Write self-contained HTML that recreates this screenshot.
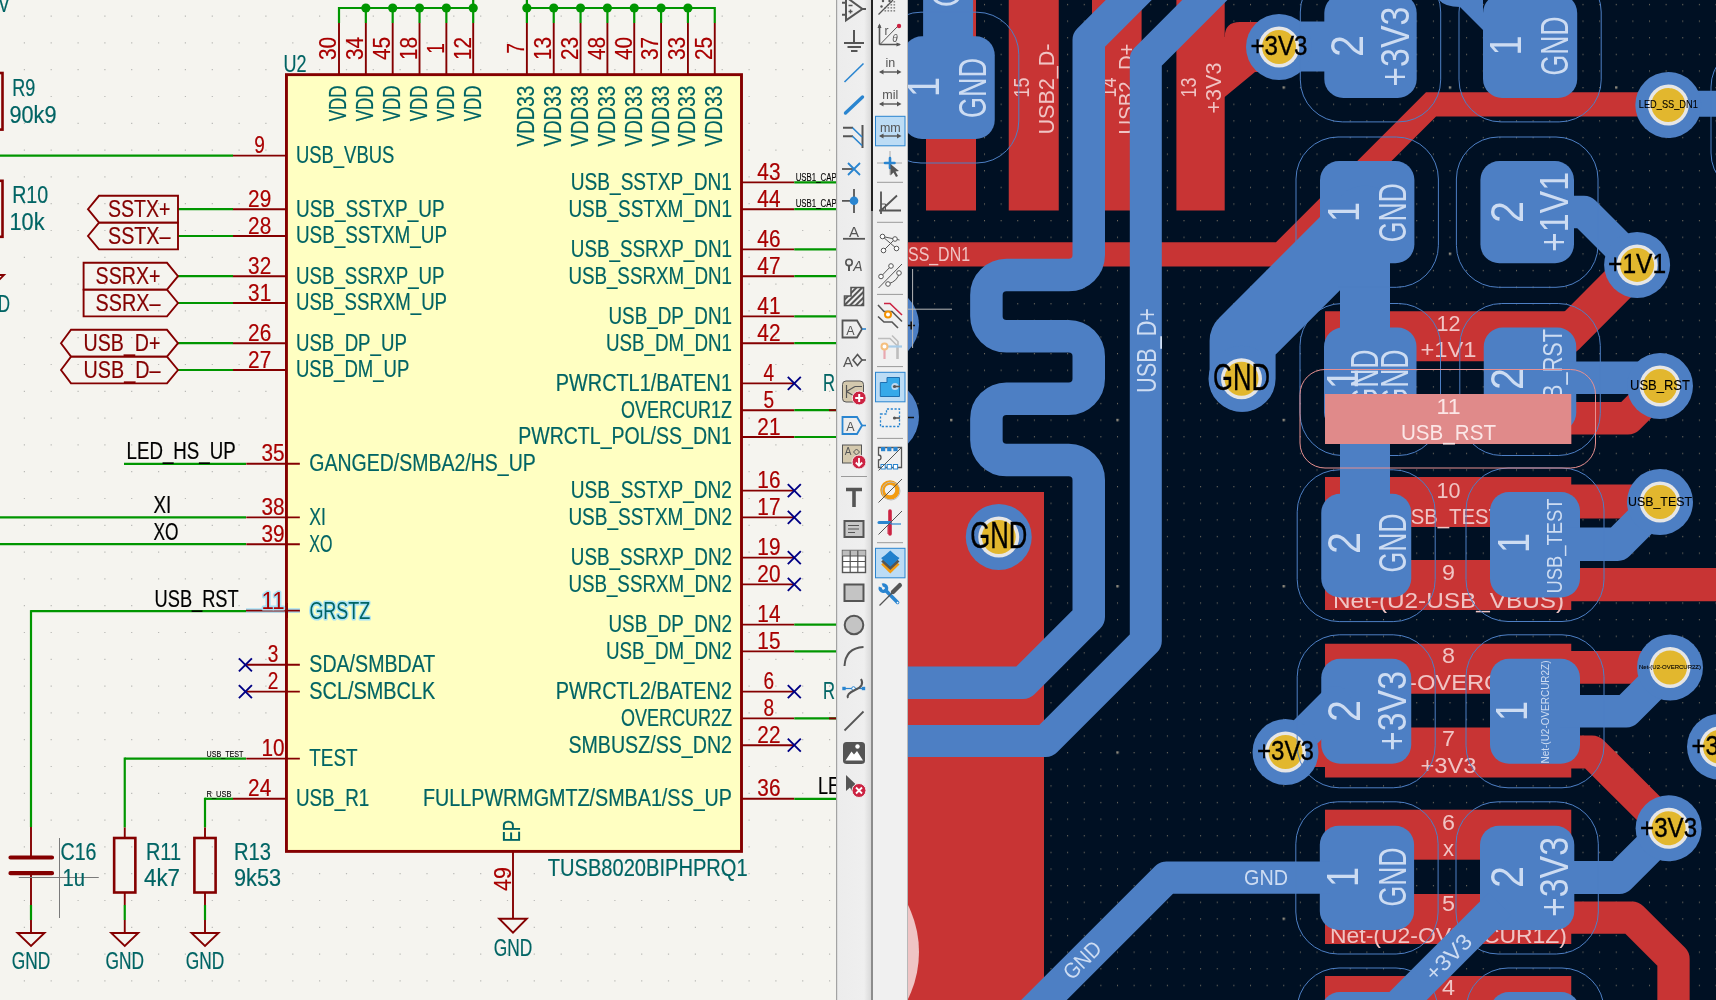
<!DOCTYPE html><html><head><meta charset="utf-8"><style>html,body{margin:0;padding:0;overflow:hidden;background:#f5f4ef}svg{display:block;will-change:transform}</style></head><body><svg width="1716" height="1000" viewBox="0 0 1716 1000"><rect x="0" y="0" width="836" height="1000" fill="#f5f4ef"/><path d="M23.8 15.5h1.2v1.2h-1.2zM23.8 42.3h1.2v1.2h-1.2zM23.8 69.1h1.2v1.2h-1.2zM23.8 95.9h1.2v1.2h-1.2zM23.8 122.7h1.2v1.2h-1.2zM23.8 149.5h1.2v1.2h-1.2zM23.8 176.3h1.2v1.2h-1.2zM23.8 203.1h1.2v1.2h-1.2zM23.8 229.9h1.2v1.2h-1.2zM23.8 256.7h1.2v1.2h-1.2zM23.8 283.5h1.2v1.2h-1.2zM23.8 310.3h1.2v1.2h-1.2zM23.8 337.1h1.2v1.2h-1.2zM23.8 363.9h1.2v1.2h-1.2zM23.8 390.7h1.2v1.2h-1.2zM23.8 417.5h1.2v1.2h-1.2zM23.8 444.3h1.2v1.2h-1.2zM23.8 471.1h1.2v1.2h-1.2zM23.8 497.9h1.2v1.2h-1.2zM23.8 524.7h1.2v1.2h-1.2zM23.8 551.5h1.2v1.2h-1.2zM23.8 578.3h1.2v1.2h-1.2zM23.8 605.1h1.2v1.2h-1.2zM23.8 631.9h1.2v1.2h-1.2zM23.8 658.7h1.2v1.2h-1.2zM23.8 685.5h1.2v1.2h-1.2zM23.8 712.3h1.2v1.2h-1.2zM23.8 739.1h1.2v1.2h-1.2zM23.8 765.9h1.2v1.2h-1.2zM23.8 792.7h1.2v1.2h-1.2zM23.8 819.5h1.2v1.2h-1.2zM23.8 846.3h1.2v1.2h-1.2zM23.8 873.1h1.2v1.2h-1.2zM23.8 899.9h1.2v1.2h-1.2zM23.8 926.7h1.2v1.2h-1.2zM23.8 953.5h1.2v1.2h-1.2zM23.8 980.3h1.2v1.2h-1.2zM50.6 15.5h1.2v1.2h-1.2zM50.6 42.3h1.2v1.2h-1.2zM50.6 69.1h1.2v1.2h-1.2zM50.6 95.9h1.2v1.2h-1.2zM50.6 122.7h1.2v1.2h-1.2zM50.6 149.5h1.2v1.2h-1.2zM50.6 176.3h1.2v1.2h-1.2zM50.6 203.1h1.2v1.2h-1.2zM50.6 229.9h1.2v1.2h-1.2zM50.6 256.7h1.2v1.2h-1.2zM50.6 283.5h1.2v1.2h-1.2zM50.6 310.3h1.2v1.2h-1.2zM50.6 337.1h1.2v1.2h-1.2zM50.6 363.9h1.2v1.2h-1.2zM50.6 390.7h1.2v1.2h-1.2zM50.6 417.5h1.2v1.2h-1.2zM50.6 444.3h1.2v1.2h-1.2zM50.6 471.1h1.2v1.2h-1.2zM50.6 497.9h1.2v1.2h-1.2zM50.6 524.7h1.2v1.2h-1.2zM50.6 551.5h1.2v1.2h-1.2zM50.6 578.3h1.2v1.2h-1.2zM50.6 605.1h1.2v1.2h-1.2zM50.6 631.9h1.2v1.2h-1.2zM50.6 658.7h1.2v1.2h-1.2zM50.6 685.5h1.2v1.2h-1.2zM50.6 712.3h1.2v1.2h-1.2zM50.6 739.1h1.2v1.2h-1.2zM50.6 765.9h1.2v1.2h-1.2zM50.6 792.7h1.2v1.2h-1.2zM50.6 819.5h1.2v1.2h-1.2zM50.6 846.3h1.2v1.2h-1.2zM50.6 873.1h1.2v1.2h-1.2zM50.6 899.9h1.2v1.2h-1.2zM50.6 926.7h1.2v1.2h-1.2zM50.6 953.5h1.2v1.2h-1.2zM50.6 980.3h1.2v1.2h-1.2zM77.5 15.5h1.2v1.2h-1.2zM77.5 42.3h1.2v1.2h-1.2zM77.5 69.1h1.2v1.2h-1.2zM77.5 95.9h1.2v1.2h-1.2zM77.5 122.7h1.2v1.2h-1.2zM77.5 149.5h1.2v1.2h-1.2zM77.5 176.3h1.2v1.2h-1.2zM77.5 203.1h1.2v1.2h-1.2zM77.5 229.9h1.2v1.2h-1.2zM77.5 256.7h1.2v1.2h-1.2zM77.5 283.5h1.2v1.2h-1.2zM77.5 310.3h1.2v1.2h-1.2zM77.5 337.1h1.2v1.2h-1.2zM77.5 363.9h1.2v1.2h-1.2zM77.5 390.7h1.2v1.2h-1.2zM77.5 417.5h1.2v1.2h-1.2zM77.5 444.3h1.2v1.2h-1.2zM77.5 471.1h1.2v1.2h-1.2zM77.5 497.9h1.2v1.2h-1.2zM77.5 524.7h1.2v1.2h-1.2zM77.5 551.5h1.2v1.2h-1.2zM77.5 578.3h1.2v1.2h-1.2zM77.5 605.1h1.2v1.2h-1.2zM77.5 631.9h1.2v1.2h-1.2zM77.5 658.7h1.2v1.2h-1.2zM77.5 685.5h1.2v1.2h-1.2zM77.5 712.3h1.2v1.2h-1.2zM77.5 739.1h1.2v1.2h-1.2zM77.5 765.9h1.2v1.2h-1.2zM77.5 792.7h1.2v1.2h-1.2zM77.5 819.5h1.2v1.2h-1.2zM77.5 846.3h1.2v1.2h-1.2zM77.5 873.1h1.2v1.2h-1.2zM77.5 899.9h1.2v1.2h-1.2zM77.5 926.7h1.2v1.2h-1.2zM77.5 953.5h1.2v1.2h-1.2zM77.5 980.3h1.2v1.2h-1.2zM104.3 15.5h1.2v1.2h-1.2zM104.3 42.3h1.2v1.2h-1.2zM104.3 69.1h1.2v1.2h-1.2zM104.3 95.9h1.2v1.2h-1.2zM104.3 122.7h1.2v1.2h-1.2zM104.3 149.5h1.2v1.2h-1.2zM104.3 176.3h1.2v1.2h-1.2zM104.3 203.1h1.2v1.2h-1.2zM104.3 229.9h1.2v1.2h-1.2zM104.3 256.7h1.2v1.2h-1.2zM104.3 283.5h1.2v1.2h-1.2zM104.3 310.3h1.2v1.2h-1.2zM104.3 337.1h1.2v1.2h-1.2zM104.3 363.9h1.2v1.2h-1.2zM104.3 390.7h1.2v1.2h-1.2zM104.3 417.5h1.2v1.2h-1.2zM104.3 444.3h1.2v1.2h-1.2zM104.3 471.1h1.2v1.2h-1.2zM104.3 497.9h1.2v1.2h-1.2zM104.3 524.7h1.2v1.2h-1.2zM104.3 551.5h1.2v1.2h-1.2zM104.3 578.3h1.2v1.2h-1.2zM104.3 605.1h1.2v1.2h-1.2zM104.3 631.9h1.2v1.2h-1.2zM104.3 658.7h1.2v1.2h-1.2zM104.3 685.5h1.2v1.2h-1.2zM104.3 712.3h1.2v1.2h-1.2zM104.3 739.1h1.2v1.2h-1.2zM104.3 765.9h1.2v1.2h-1.2zM104.3 792.7h1.2v1.2h-1.2zM104.3 819.5h1.2v1.2h-1.2zM104.3 846.3h1.2v1.2h-1.2zM104.3 873.1h1.2v1.2h-1.2zM104.3 899.9h1.2v1.2h-1.2zM104.3 926.7h1.2v1.2h-1.2zM104.3 953.5h1.2v1.2h-1.2zM104.3 980.3h1.2v1.2h-1.2zM131.1 15.5h1.2v1.2h-1.2zM131.1 42.3h1.2v1.2h-1.2zM131.1 69.1h1.2v1.2h-1.2zM131.1 95.9h1.2v1.2h-1.2zM131.1 122.7h1.2v1.2h-1.2zM131.1 149.5h1.2v1.2h-1.2zM131.1 176.3h1.2v1.2h-1.2zM131.1 203.1h1.2v1.2h-1.2zM131.1 229.9h1.2v1.2h-1.2zM131.1 256.7h1.2v1.2h-1.2zM131.1 283.5h1.2v1.2h-1.2zM131.1 310.3h1.2v1.2h-1.2zM131.1 337.1h1.2v1.2h-1.2zM131.1 363.9h1.2v1.2h-1.2zM131.1 390.7h1.2v1.2h-1.2zM131.1 417.5h1.2v1.2h-1.2zM131.1 444.3h1.2v1.2h-1.2zM131.1 471.1h1.2v1.2h-1.2zM131.1 497.9h1.2v1.2h-1.2zM131.1 524.7h1.2v1.2h-1.2zM131.1 551.5h1.2v1.2h-1.2zM131.1 578.3h1.2v1.2h-1.2zM131.1 605.1h1.2v1.2h-1.2zM131.1 631.9h1.2v1.2h-1.2zM131.1 658.7h1.2v1.2h-1.2zM131.1 685.5h1.2v1.2h-1.2zM131.1 712.3h1.2v1.2h-1.2zM131.1 739.1h1.2v1.2h-1.2zM131.1 765.9h1.2v1.2h-1.2zM131.1 792.7h1.2v1.2h-1.2zM131.1 819.5h1.2v1.2h-1.2zM131.1 846.3h1.2v1.2h-1.2zM131.1 873.1h1.2v1.2h-1.2zM131.1 899.9h1.2v1.2h-1.2zM131.1 926.7h1.2v1.2h-1.2zM131.1 953.5h1.2v1.2h-1.2zM131.1 980.3h1.2v1.2h-1.2zM158.0 15.5h1.2v1.2h-1.2zM158.0 42.3h1.2v1.2h-1.2zM158.0 69.1h1.2v1.2h-1.2zM158.0 95.9h1.2v1.2h-1.2zM158.0 122.7h1.2v1.2h-1.2zM158.0 149.5h1.2v1.2h-1.2zM158.0 176.3h1.2v1.2h-1.2zM158.0 203.1h1.2v1.2h-1.2zM158.0 229.9h1.2v1.2h-1.2zM158.0 256.7h1.2v1.2h-1.2zM158.0 283.5h1.2v1.2h-1.2zM158.0 310.3h1.2v1.2h-1.2zM158.0 337.1h1.2v1.2h-1.2zM158.0 363.9h1.2v1.2h-1.2zM158.0 390.7h1.2v1.2h-1.2zM158.0 417.5h1.2v1.2h-1.2zM158.0 444.3h1.2v1.2h-1.2zM158.0 471.1h1.2v1.2h-1.2zM158.0 497.9h1.2v1.2h-1.2zM158.0 524.7h1.2v1.2h-1.2zM158.0 551.5h1.2v1.2h-1.2zM158.0 578.3h1.2v1.2h-1.2zM158.0 605.1h1.2v1.2h-1.2zM158.0 631.9h1.2v1.2h-1.2zM158.0 658.7h1.2v1.2h-1.2zM158.0 685.5h1.2v1.2h-1.2zM158.0 712.3h1.2v1.2h-1.2zM158.0 739.1h1.2v1.2h-1.2zM158.0 765.9h1.2v1.2h-1.2zM158.0 792.7h1.2v1.2h-1.2zM158.0 819.5h1.2v1.2h-1.2zM158.0 846.3h1.2v1.2h-1.2zM158.0 873.1h1.2v1.2h-1.2zM158.0 899.9h1.2v1.2h-1.2zM158.0 926.7h1.2v1.2h-1.2zM158.0 953.5h1.2v1.2h-1.2zM158.0 980.3h1.2v1.2h-1.2zM184.8 15.5h1.2v1.2h-1.2zM184.8 42.3h1.2v1.2h-1.2zM184.8 69.1h1.2v1.2h-1.2zM184.8 95.9h1.2v1.2h-1.2zM184.8 122.7h1.2v1.2h-1.2zM184.8 149.5h1.2v1.2h-1.2zM184.8 176.3h1.2v1.2h-1.2zM184.8 203.1h1.2v1.2h-1.2zM184.8 229.9h1.2v1.2h-1.2zM184.8 256.7h1.2v1.2h-1.2zM184.8 283.5h1.2v1.2h-1.2zM184.8 310.3h1.2v1.2h-1.2zM184.8 337.1h1.2v1.2h-1.2zM184.8 363.9h1.2v1.2h-1.2zM184.8 390.7h1.2v1.2h-1.2zM184.8 417.5h1.2v1.2h-1.2zM184.8 444.3h1.2v1.2h-1.2zM184.8 471.1h1.2v1.2h-1.2zM184.8 497.9h1.2v1.2h-1.2zM184.8 524.7h1.2v1.2h-1.2zM184.8 551.5h1.2v1.2h-1.2zM184.8 578.3h1.2v1.2h-1.2zM184.8 605.1h1.2v1.2h-1.2zM184.8 631.9h1.2v1.2h-1.2zM184.8 658.7h1.2v1.2h-1.2zM184.8 685.5h1.2v1.2h-1.2zM184.8 712.3h1.2v1.2h-1.2zM184.8 739.1h1.2v1.2h-1.2zM184.8 765.9h1.2v1.2h-1.2zM184.8 792.7h1.2v1.2h-1.2zM184.8 819.5h1.2v1.2h-1.2zM184.8 846.3h1.2v1.2h-1.2zM184.8 873.1h1.2v1.2h-1.2zM184.8 899.9h1.2v1.2h-1.2zM184.8 926.7h1.2v1.2h-1.2zM184.8 953.5h1.2v1.2h-1.2zM184.8 980.3h1.2v1.2h-1.2zM211.7 15.5h1.2v1.2h-1.2zM211.7 42.3h1.2v1.2h-1.2zM211.7 69.1h1.2v1.2h-1.2zM211.7 95.9h1.2v1.2h-1.2zM211.7 122.7h1.2v1.2h-1.2zM211.7 149.5h1.2v1.2h-1.2zM211.7 176.3h1.2v1.2h-1.2zM211.7 203.1h1.2v1.2h-1.2zM211.7 229.9h1.2v1.2h-1.2zM211.7 256.7h1.2v1.2h-1.2zM211.7 283.5h1.2v1.2h-1.2zM211.7 310.3h1.2v1.2h-1.2zM211.7 337.1h1.2v1.2h-1.2zM211.7 363.9h1.2v1.2h-1.2zM211.7 390.7h1.2v1.2h-1.2zM211.7 417.5h1.2v1.2h-1.2zM211.7 444.3h1.2v1.2h-1.2zM211.7 471.1h1.2v1.2h-1.2zM211.7 497.9h1.2v1.2h-1.2zM211.7 524.7h1.2v1.2h-1.2zM211.7 551.5h1.2v1.2h-1.2zM211.7 578.3h1.2v1.2h-1.2zM211.7 605.1h1.2v1.2h-1.2zM211.7 631.9h1.2v1.2h-1.2zM211.7 658.7h1.2v1.2h-1.2zM211.7 685.5h1.2v1.2h-1.2zM211.7 712.3h1.2v1.2h-1.2zM211.7 739.1h1.2v1.2h-1.2zM211.7 765.9h1.2v1.2h-1.2zM211.7 792.7h1.2v1.2h-1.2zM211.7 819.5h1.2v1.2h-1.2zM211.7 846.3h1.2v1.2h-1.2zM211.7 873.1h1.2v1.2h-1.2zM211.7 899.9h1.2v1.2h-1.2zM211.7 926.7h1.2v1.2h-1.2zM211.7 953.5h1.2v1.2h-1.2zM211.7 980.3h1.2v1.2h-1.2zM238.5 15.5h1.2v1.2h-1.2zM238.5 42.3h1.2v1.2h-1.2zM238.5 69.1h1.2v1.2h-1.2zM238.5 95.9h1.2v1.2h-1.2zM238.5 122.7h1.2v1.2h-1.2zM238.5 149.5h1.2v1.2h-1.2zM238.5 176.3h1.2v1.2h-1.2zM238.5 203.1h1.2v1.2h-1.2zM238.5 229.9h1.2v1.2h-1.2zM238.5 256.7h1.2v1.2h-1.2zM238.5 283.5h1.2v1.2h-1.2zM238.5 310.3h1.2v1.2h-1.2zM238.5 337.1h1.2v1.2h-1.2zM238.5 363.9h1.2v1.2h-1.2zM238.5 390.7h1.2v1.2h-1.2zM238.5 417.5h1.2v1.2h-1.2zM238.5 444.3h1.2v1.2h-1.2zM238.5 471.1h1.2v1.2h-1.2zM238.5 497.9h1.2v1.2h-1.2zM238.5 524.7h1.2v1.2h-1.2zM238.5 551.5h1.2v1.2h-1.2zM238.5 578.3h1.2v1.2h-1.2zM238.5 605.1h1.2v1.2h-1.2zM238.5 631.9h1.2v1.2h-1.2zM238.5 658.7h1.2v1.2h-1.2zM238.5 685.5h1.2v1.2h-1.2zM238.5 712.3h1.2v1.2h-1.2zM238.5 739.1h1.2v1.2h-1.2zM238.5 765.9h1.2v1.2h-1.2zM238.5 792.7h1.2v1.2h-1.2zM238.5 819.5h1.2v1.2h-1.2zM238.5 846.3h1.2v1.2h-1.2zM238.5 873.1h1.2v1.2h-1.2zM238.5 899.9h1.2v1.2h-1.2zM238.5 926.7h1.2v1.2h-1.2zM238.5 953.5h1.2v1.2h-1.2zM238.5 980.3h1.2v1.2h-1.2zM265.3 15.5h1.2v1.2h-1.2zM265.3 42.3h1.2v1.2h-1.2zM265.3 69.1h1.2v1.2h-1.2zM265.3 95.9h1.2v1.2h-1.2zM265.3 122.7h1.2v1.2h-1.2zM265.3 149.5h1.2v1.2h-1.2zM265.3 176.3h1.2v1.2h-1.2zM265.3 203.1h1.2v1.2h-1.2zM265.3 229.9h1.2v1.2h-1.2zM265.3 256.7h1.2v1.2h-1.2zM265.3 283.5h1.2v1.2h-1.2zM265.3 310.3h1.2v1.2h-1.2zM265.3 337.1h1.2v1.2h-1.2zM265.3 363.9h1.2v1.2h-1.2zM265.3 390.7h1.2v1.2h-1.2zM265.3 417.5h1.2v1.2h-1.2zM265.3 444.3h1.2v1.2h-1.2zM265.3 471.1h1.2v1.2h-1.2zM265.3 497.9h1.2v1.2h-1.2zM265.3 524.7h1.2v1.2h-1.2zM265.3 551.5h1.2v1.2h-1.2zM265.3 578.3h1.2v1.2h-1.2zM265.3 605.1h1.2v1.2h-1.2zM265.3 631.9h1.2v1.2h-1.2zM265.3 658.7h1.2v1.2h-1.2zM265.3 685.5h1.2v1.2h-1.2zM265.3 712.3h1.2v1.2h-1.2zM265.3 739.1h1.2v1.2h-1.2zM265.3 765.9h1.2v1.2h-1.2zM265.3 792.7h1.2v1.2h-1.2zM265.3 819.5h1.2v1.2h-1.2zM265.3 846.3h1.2v1.2h-1.2zM265.3 873.1h1.2v1.2h-1.2zM265.3 899.9h1.2v1.2h-1.2zM265.3 926.7h1.2v1.2h-1.2zM265.3 953.5h1.2v1.2h-1.2zM265.3 980.3h1.2v1.2h-1.2zM292.2 15.5h1.2v1.2h-1.2zM292.2 42.3h1.2v1.2h-1.2zM292.2 69.1h1.2v1.2h-1.2zM292.2 95.9h1.2v1.2h-1.2zM292.2 122.7h1.2v1.2h-1.2zM292.2 149.5h1.2v1.2h-1.2zM292.2 176.3h1.2v1.2h-1.2zM292.2 203.1h1.2v1.2h-1.2zM292.2 229.9h1.2v1.2h-1.2zM292.2 256.7h1.2v1.2h-1.2zM292.2 283.5h1.2v1.2h-1.2zM292.2 310.3h1.2v1.2h-1.2zM292.2 337.1h1.2v1.2h-1.2zM292.2 363.9h1.2v1.2h-1.2zM292.2 390.7h1.2v1.2h-1.2zM292.2 417.5h1.2v1.2h-1.2zM292.2 444.3h1.2v1.2h-1.2zM292.2 471.1h1.2v1.2h-1.2zM292.2 497.9h1.2v1.2h-1.2zM292.2 524.7h1.2v1.2h-1.2zM292.2 551.5h1.2v1.2h-1.2zM292.2 578.3h1.2v1.2h-1.2zM292.2 605.1h1.2v1.2h-1.2zM292.2 631.9h1.2v1.2h-1.2zM292.2 658.7h1.2v1.2h-1.2zM292.2 685.5h1.2v1.2h-1.2zM292.2 712.3h1.2v1.2h-1.2zM292.2 739.1h1.2v1.2h-1.2zM292.2 765.9h1.2v1.2h-1.2zM292.2 792.7h1.2v1.2h-1.2zM292.2 819.5h1.2v1.2h-1.2zM292.2 846.3h1.2v1.2h-1.2zM292.2 873.1h1.2v1.2h-1.2zM292.2 899.9h1.2v1.2h-1.2zM292.2 926.7h1.2v1.2h-1.2zM292.2 953.5h1.2v1.2h-1.2zM292.2 980.3h1.2v1.2h-1.2zM319.0 15.5h1.2v1.2h-1.2zM319.0 42.3h1.2v1.2h-1.2zM319.0 69.1h1.2v1.2h-1.2zM319.0 95.9h1.2v1.2h-1.2zM319.0 122.7h1.2v1.2h-1.2zM319.0 149.5h1.2v1.2h-1.2zM319.0 176.3h1.2v1.2h-1.2zM319.0 203.1h1.2v1.2h-1.2zM319.0 229.9h1.2v1.2h-1.2zM319.0 256.7h1.2v1.2h-1.2zM319.0 283.5h1.2v1.2h-1.2zM319.0 310.3h1.2v1.2h-1.2zM319.0 337.1h1.2v1.2h-1.2zM319.0 363.9h1.2v1.2h-1.2zM319.0 390.7h1.2v1.2h-1.2zM319.0 417.5h1.2v1.2h-1.2zM319.0 444.3h1.2v1.2h-1.2zM319.0 471.1h1.2v1.2h-1.2zM319.0 497.9h1.2v1.2h-1.2zM319.0 524.7h1.2v1.2h-1.2zM319.0 551.5h1.2v1.2h-1.2zM319.0 578.3h1.2v1.2h-1.2zM319.0 605.1h1.2v1.2h-1.2zM319.0 631.9h1.2v1.2h-1.2zM319.0 658.7h1.2v1.2h-1.2zM319.0 685.5h1.2v1.2h-1.2zM319.0 712.3h1.2v1.2h-1.2zM319.0 739.1h1.2v1.2h-1.2zM319.0 765.9h1.2v1.2h-1.2zM319.0 792.7h1.2v1.2h-1.2zM319.0 819.5h1.2v1.2h-1.2zM319.0 846.3h1.2v1.2h-1.2zM319.0 873.1h1.2v1.2h-1.2zM319.0 899.9h1.2v1.2h-1.2zM319.0 926.7h1.2v1.2h-1.2zM319.0 953.5h1.2v1.2h-1.2zM319.0 980.3h1.2v1.2h-1.2zM345.9 15.5h1.2v1.2h-1.2zM345.9 42.3h1.2v1.2h-1.2zM345.9 69.1h1.2v1.2h-1.2zM345.9 95.9h1.2v1.2h-1.2zM345.9 122.7h1.2v1.2h-1.2zM345.9 149.5h1.2v1.2h-1.2zM345.9 176.3h1.2v1.2h-1.2zM345.9 203.1h1.2v1.2h-1.2zM345.9 229.9h1.2v1.2h-1.2zM345.9 256.7h1.2v1.2h-1.2zM345.9 283.5h1.2v1.2h-1.2zM345.9 310.3h1.2v1.2h-1.2zM345.9 337.1h1.2v1.2h-1.2zM345.9 363.9h1.2v1.2h-1.2zM345.9 390.7h1.2v1.2h-1.2zM345.9 417.5h1.2v1.2h-1.2zM345.9 444.3h1.2v1.2h-1.2zM345.9 471.1h1.2v1.2h-1.2zM345.9 497.9h1.2v1.2h-1.2zM345.9 524.7h1.2v1.2h-1.2zM345.9 551.5h1.2v1.2h-1.2zM345.9 578.3h1.2v1.2h-1.2zM345.9 605.1h1.2v1.2h-1.2zM345.9 631.9h1.2v1.2h-1.2zM345.9 658.7h1.2v1.2h-1.2zM345.9 685.5h1.2v1.2h-1.2zM345.9 712.3h1.2v1.2h-1.2zM345.9 739.1h1.2v1.2h-1.2zM345.9 765.9h1.2v1.2h-1.2zM345.9 792.7h1.2v1.2h-1.2zM345.9 819.5h1.2v1.2h-1.2zM345.9 846.3h1.2v1.2h-1.2zM345.9 873.1h1.2v1.2h-1.2zM345.9 899.9h1.2v1.2h-1.2zM345.9 926.7h1.2v1.2h-1.2zM345.9 953.5h1.2v1.2h-1.2zM345.9 980.3h1.2v1.2h-1.2zM372.7 15.5h1.2v1.2h-1.2zM372.7 42.3h1.2v1.2h-1.2zM372.7 69.1h1.2v1.2h-1.2zM372.7 95.9h1.2v1.2h-1.2zM372.7 122.7h1.2v1.2h-1.2zM372.7 149.5h1.2v1.2h-1.2zM372.7 176.3h1.2v1.2h-1.2zM372.7 203.1h1.2v1.2h-1.2zM372.7 229.9h1.2v1.2h-1.2zM372.7 256.7h1.2v1.2h-1.2zM372.7 283.5h1.2v1.2h-1.2zM372.7 310.3h1.2v1.2h-1.2zM372.7 337.1h1.2v1.2h-1.2zM372.7 363.9h1.2v1.2h-1.2zM372.7 390.7h1.2v1.2h-1.2zM372.7 417.5h1.2v1.2h-1.2zM372.7 444.3h1.2v1.2h-1.2zM372.7 471.1h1.2v1.2h-1.2zM372.7 497.9h1.2v1.2h-1.2zM372.7 524.7h1.2v1.2h-1.2zM372.7 551.5h1.2v1.2h-1.2zM372.7 578.3h1.2v1.2h-1.2zM372.7 605.1h1.2v1.2h-1.2zM372.7 631.9h1.2v1.2h-1.2zM372.7 658.7h1.2v1.2h-1.2zM372.7 685.5h1.2v1.2h-1.2zM372.7 712.3h1.2v1.2h-1.2zM372.7 739.1h1.2v1.2h-1.2zM372.7 765.9h1.2v1.2h-1.2zM372.7 792.7h1.2v1.2h-1.2zM372.7 819.5h1.2v1.2h-1.2zM372.7 846.3h1.2v1.2h-1.2zM372.7 873.1h1.2v1.2h-1.2zM372.7 899.9h1.2v1.2h-1.2zM372.7 926.7h1.2v1.2h-1.2zM372.7 953.5h1.2v1.2h-1.2zM372.7 980.3h1.2v1.2h-1.2zM399.5 15.5h1.2v1.2h-1.2zM399.5 42.3h1.2v1.2h-1.2zM399.5 69.1h1.2v1.2h-1.2zM399.5 95.9h1.2v1.2h-1.2zM399.5 122.7h1.2v1.2h-1.2zM399.5 149.5h1.2v1.2h-1.2zM399.5 176.3h1.2v1.2h-1.2zM399.5 203.1h1.2v1.2h-1.2zM399.5 229.9h1.2v1.2h-1.2zM399.5 256.7h1.2v1.2h-1.2zM399.5 283.5h1.2v1.2h-1.2zM399.5 310.3h1.2v1.2h-1.2zM399.5 337.1h1.2v1.2h-1.2zM399.5 363.9h1.2v1.2h-1.2zM399.5 390.7h1.2v1.2h-1.2zM399.5 417.5h1.2v1.2h-1.2zM399.5 444.3h1.2v1.2h-1.2zM399.5 471.1h1.2v1.2h-1.2zM399.5 497.9h1.2v1.2h-1.2zM399.5 524.7h1.2v1.2h-1.2zM399.5 551.5h1.2v1.2h-1.2zM399.5 578.3h1.2v1.2h-1.2zM399.5 605.1h1.2v1.2h-1.2zM399.5 631.9h1.2v1.2h-1.2zM399.5 658.7h1.2v1.2h-1.2zM399.5 685.5h1.2v1.2h-1.2zM399.5 712.3h1.2v1.2h-1.2zM399.5 739.1h1.2v1.2h-1.2zM399.5 765.9h1.2v1.2h-1.2zM399.5 792.7h1.2v1.2h-1.2zM399.5 819.5h1.2v1.2h-1.2zM399.5 846.3h1.2v1.2h-1.2zM399.5 873.1h1.2v1.2h-1.2zM399.5 899.9h1.2v1.2h-1.2zM399.5 926.7h1.2v1.2h-1.2zM399.5 953.5h1.2v1.2h-1.2zM399.5 980.3h1.2v1.2h-1.2zM426.4 15.5h1.2v1.2h-1.2zM426.4 42.3h1.2v1.2h-1.2zM426.4 69.1h1.2v1.2h-1.2zM426.4 95.9h1.2v1.2h-1.2zM426.4 122.7h1.2v1.2h-1.2zM426.4 149.5h1.2v1.2h-1.2zM426.4 176.3h1.2v1.2h-1.2zM426.4 203.1h1.2v1.2h-1.2zM426.4 229.9h1.2v1.2h-1.2zM426.4 256.7h1.2v1.2h-1.2zM426.4 283.5h1.2v1.2h-1.2zM426.4 310.3h1.2v1.2h-1.2zM426.4 337.1h1.2v1.2h-1.2zM426.4 363.9h1.2v1.2h-1.2zM426.4 390.7h1.2v1.2h-1.2zM426.4 417.5h1.2v1.2h-1.2zM426.4 444.3h1.2v1.2h-1.2zM426.4 471.1h1.2v1.2h-1.2zM426.4 497.9h1.2v1.2h-1.2zM426.4 524.7h1.2v1.2h-1.2zM426.4 551.5h1.2v1.2h-1.2zM426.4 578.3h1.2v1.2h-1.2zM426.4 605.1h1.2v1.2h-1.2zM426.4 631.9h1.2v1.2h-1.2zM426.4 658.7h1.2v1.2h-1.2zM426.4 685.5h1.2v1.2h-1.2zM426.4 712.3h1.2v1.2h-1.2zM426.4 739.1h1.2v1.2h-1.2zM426.4 765.9h1.2v1.2h-1.2zM426.4 792.7h1.2v1.2h-1.2zM426.4 819.5h1.2v1.2h-1.2zM426.4 846.3h1.2v1.2h-1.2zM426.4 873.1h1.2v1.2h-1.2zM426.4 899.9h1.2v1.2h-1.2zM426.4 926.7h1.2v1.2h-1.2zM426.4 953.5h1.2v1.2h-1.2zM426.4 980.3h1.2v1.2h-1.2zM453.2 15.5h1.2v1.2h-1.2zM453.2 42.3h1.2v1.2h-1.2zM453.2 69.1h1.2v1.2h-1.2zM453.2 95.9h1.2v1.2h-1.2zM453.2 122.7h1.2v1.2h-1.2zM453.2 149.5h1.2v1.2h-1.2zM453.2 176.3h1.2v1.2h-1.2zM453.2 203.1h1.2v1.2h-1.2zM453.2 229.9h1.2v1.2h-1.2zM453.2 256.7h1.2v1.2h-1.2zM453.2 283.5h1.2v1.2h-1.2zM453.2 310.3h1.2v1.2h-1.2zM453.2 337.1h1.2v1.2h-1.2zM453.2 363.9h1.2v1.2h-1.2zM453.2 390.7h1.2v1.2h-1.2zM453.2 417.5h1.2v1.2h-1.2zM453.2 444.3h1.2v1.2h-1.2zM453.2 471.1h1.2v1.2h-1.2zM453.2 497.9h1.2v1.2h-1.2zM453.2 524.7h1.2v1.2h-1.2zM453.2 551.5h1.2v1.2h-1.2zM453.2 578.3h1.2v1.2h-1.2zM453.2 605.1h1.2v1.2h-1.2zM453.2 631.9h1.2v1.2h-1.2zM453.2 658.7h1.2v1.2h-1.2zM453.2 685.5h1.2v1.2h-1.2zM453.2 712.3h1.2v1.2h-1.2zM453.2 739.1h1.2v1.2h-1.2zM453.2 765.9h1.2v1.2h-1.2zM453.2 792.7h1.2v1.2h-1.2zM453.2 819.5h1.2v1.2h-1.2zM453.2 846.3h1.2v1.2h-1.2zM453.2 873.1h1.2v1.2h-1.2zM453.2 899.9h1.2v1.2h-1.2zM453.2 926.7h1.2v1.2h-1.2zM453.2 953.5h1.2v1.2h-1.2zM453.2 980.3h1.2v1.2h-1.2zM480.1 15.5h1.2v1.2h-1.2zM480.1 42.3h1.2v1.2h-1.2zM480.1 69.1h1.2v1.2h-1.2zM480.1 95.9h1.2v1.2h-1.2zM480.1 122.7h1.2v1.2h-1.2zM480.1 149.5h1.2v1.2h-1.2zM480.1 176.3h1.2v1.2h-1.2zM480.1 203.1h1.2v1.2h-1.2zM480.1 229.9h1.2v1.2h-1.2zM480.1 256.7h1.2v1.2h-1.2zM480.1 283.5h1.2v1.2h-1.2zM480.1 310.3h1.2v1.2h-1.2zM480.1 337.1h1.2v1.2h-1.2zM480.1 363.9h1.2v1.2h-1.2zM480.1 390.7h1.2v1.2h-1.2zM480.1 417.5h1.2v1.2h-1.2zM480.1 444.3h1.2v1.2h-1.2zM480.1 471.1h1.2v1.2h-1.2zM480.1 497.9h1.2v1.2h-1.2zM480.1 524.7h1.2v1.2h-1.2zM480.1 551.5h1.2v1.2h-1.2zM480.1 578.3h1.2v1.2h-1.2zM480.1 605.1h1.2v1.2h-1.2zM480.1 631.9h1.2v1.2h-1.2zM480.1 658.7h1.2v1.2h-1.2zM480.1 685.5h1.2v1.2h-1.2zM480.1 712.3h1.2v1.2h-1.2zM480.1 739.1h1.2v1.2h-1.2zM480.1 765.9h1.2v1.2h-1.2zM480.1 792.7h1.2v1.2h-1.2zM480.1 819.5h1.2v1.2h-1.2zM480.1 846.3h1.2v1.2h-1.2zM480.1 873.1h1.2v1.2h-1.2zM480.1 899.9h1.2v1.2h-1.2zM480.1 926.7h1.2v1.2h-1.2zM480.1 953.5h1.2v1.2h-1.2zM480.1 980.3h1.2v1.2h-1.2zM506.9 15.5h1.2v1.2h-1.2zM506.9 42.3h1.2v1.2h-1.2zM506.9 69.1h1.2v1.2h-1.2zM506.9 95.9h1.2v1.2h-1.2zM506.9 122.7h1.2v1.2h-1.2zM506.9 149.5h1.2v1.2h-1.2zM506.9 176.3h1.2v1.2h-1.2zM506.9 203.1h1.2v1.2h-1.2zM506.9 229.9h1.2v1.2h-1.2zM506.9 256.7h1.2v1.2h-1.2zM506.9 283.5h1.2v1.2h-1.2zM506.9 310.3h1.2v1.2h-1.2zM506.9 337.1h1.2v1.2h-1.2zM506.9 363.9h1.2v1.2h-1.2zM506.9 390.7h1.2v1.2h-1.2zM506.9 417.5h1.2v1.2h-1.2zM506.9 444.3h1.2v1.2h-1.2zM506.9 471.1h1.2v1.2h-1.2zM506.9 497.9h1.2v1.2h-1.2zM506.9 524.7h1.2v1.2h-1.2zM506.9 551.5h1.2v1.2h-1.2zM506.9 578.3h1.2v1.2h-1.2zM506.9 605.1h1.2v1.2h-1.2zM506.9 631.9h1.2v1.2h-1.2zM506.9 658.7h1.2v1.2h-1.2zM506.9 685.5h1.2v1.2h-1.2zM506.9 712.3h1.2v1.2h-1.2zM506.9 739.1h1.2v1.2h-1.2zM506.9 765.9h1.2v1.2h-1.2zM506.9 792.7h1.2v1.2h-1.2zM506.9 819.5h1.2v1.2h-1.2zM506.9 846.3h1.2v1.2h-1.2zM506.9 873.1h1.2v1.2h-1.2zM506.9 899.9h1.2v1.2h-1.2zM506.9 926.7h1.2v1.2h-1.2zM506.9 953.5h1.2v1.2h-1.2zM506.9 980.3h1.2v1.2h-1.2zM533.7 15.5h1.2v1.2h-1.2zM533.7 42.3h1.2v1.2h-1.2zM533.7 69.1h1.2v1.2h-1.2zM533.7 95.9h1.2v1.2h-1.2zM533.7 122.7h1.2v1.2h-1.2zM533.7 149.5h1.2v1.2h-1.2zM533.7 176.3h1.2v1.2h-1.2zM533.7 203.1h1.2v1.2h-1.2zM533.7 229.9h1.2v1.2h-1.2zM533.7 256.7h1.2v1.2h-1.2zM533.7 283.5h1.2v1.2h-1.2zM533.7 310.3h1.2v1.2h-1.2zM533.7 337.1h1.2v1.2h-1.2zM533.7 363.9h1.2v1.2h-1.2zM533.7 390.7h1.2v1.2h-1.2zM533.7 417.5h1.2v1.2h-1.2zM533.7 444.3h1.2v1.2h-1.2zM533.7 471.1h1.2v1.2h-1.2zM533.7 497.9h1.2v1.2h-1.2zM533.7 524.7h1.2v1.2h-1.2zM533.7 551.5h1.2v1.2h-1.2zM533.7 578.3h1.2v1.2h-1.2zM533.7 605.1h1.2v1.2h-1.2zM533.7 631.9h1.2v1.2h-1.2zM533.7 658.7h1.2v1.2h-1.2zM533.7 685.5h1.2v1.2h-1.2zM533.7 712.3h1.2v1.2h-1.2zM533.7 739.1h1.2v1.2h-1.2zM533.7 765.9h1.2v1.2h-1.2zM533.7 792.7h1.2v1.2h-1.2zM533.7 819.5h1.2v1.2h-1.2zM533.7 846.3h1.2v1.2h-1.2zM533.7 873.1h1.2v1.2h-1.2zM533.7 899.9h1.2v1.2h-1.2zM533.7 926.7h1.2v1.2h-1.2zM533.7 953.5h1.2v1.2h-1.2zM533.7 980.3h1.2v1.2h-1.2zM560.6 15.5h1.2v1.2h-1.2zM560.6 42.3h1.2v1.2h-1.2zM560.6 69.1h1.2v1.2h-1.2zM560.6 95.9h1.2v1.2h-1.2zM560.6 122.7h1.2v1.2h-1.2zM560.6 149.5h1.2v1.2h-1.2zM560.6 176.3h1.2v1.2h-1.2zM560.6 203.1h1.2v1.2h-1.2zM560.6 229.9h1.2v1.2h-1.2zM560.6 256.7h1.2v1.2h-1.2zM560.6 283.5h1.2v1.2h-1.2zM560.6 310.3h1.2v1.2h-1.2zM560.6 337.1h1.2v1.2h-1.2zM560.6 363.9h1.2v1.2h-1.2zM560.6 390.7h1.2v1.2h-1.2zM560.6 417.5h1.2v1.2h-1.2zM560.6 444.3h1.2v1.2h-1.2zM560.6 471.1h1.2v1.2h-1.2zM560.6 497.9h1.2v1.2h-1.2zM560.6 524.7h1.2v1.2h-1.2zM560.6 551.5h1.2v1.2h-1.2zM560.6 578.3h1.2v1.2h-1.2zM560.6 605.1h1.2v1.2h-1.2zM560.6 631.9h1.2v1.2h-1.2zM560.6 658.7h1.2v1.2h-1.2zM560.6 685.5h1.2v1.2h-1.2zM560.6 712.3h1.2v1.2h-1.2zM560.6 739.1h1.2v1.2h-1.2zM560.6 765.9h1.2v1.2h-1.2zM560.6 792.7h1.2v1.2h-1.2zM560.6 819.5h1.2v1.2h-1.2zM560.6 846.3h1.2v1.2h-1.2zM560.6 873.1h1.2v1.2h-1.2zM560.6 899.9h1.2v1.2h-1.2zM560.6 926.7h1.2v1.2h-1.2zM560.6 953.5h1.2v1.2h-1.2zM560.6 980.3h1.2v1.2h-1.2zM587.4 15.5h1.2v1.2h-1.2zM587.4 42.3h1.2v1.2h-1.2zM587.4 69.1h1.2v1.2h-1.2zM587.4 95.9h1.2v1.2h-1.2zM587.4 122.7h1.2v1.2h-1.2zM587.4 149.5h1.2v1.2h-1.2zM587.4 176.3h1.2v1.2h-1.2zM587.4 203.1h1.2v1.2h-1.2zM587.4 229.9h1.2v1.2h-1.2zM587.4 256.7h1.2v1.2h-1.2zM587.4 283.5h1.2v1.2h-1.2zM587.4 310.3h1.2v1.2h-1.2zM587.4 337.1h1.2v1.2h-1.2zM587.4 363.9h1.2v1.2h-1.2zM587.4 390.7h1.2v1.2h-1.2zM587.4 417.5h1.2v1.2h-1.2zM587.4 444.3h1.2v1.2h-1.2zM587.4 471.1h1.2v1.2h-1.2zM587.4 497.9h1.2v1.2h-1.2zM587.4 524.7h1.2v1.2h-1.2zM587.4 551.5h1.2v1.2h-1.2zM587.4 578.3h1.2v1.2h-1.2zM587.4 605.1h1.2v1.2h-1.2zM587.4 631.9h1.2v1.2h-1.2zM587.4 658.7h1.2v1.2h-1.2zM587.4 685.5h1.2v1.2h-1.2zM587.4 712.3h1.2v1.2h-1.2zM587.4 739.1h1.2v1.2h-1.2zM587.4 765.9h1.2v1.2h-1.2zM587.4 792.7h1.2v1.2h-1.2zM587.4 819.5h1.2v1.2h-1.2zM587.4 846.3h1.2v1.2h-1.2zM587.4 873.1h1.2v1.2h-1.2zM587.4 899.9h1.2v1.2h-1.2zM587.4 926.7h1.2v1.2h-1.2zM587.4 953.5h1.2v1.2h-1.2zM587.4 980.3h1.2v1.2h-1.2zM614.3 15.5h1.2v1.2h-1.2zM614.3 42.3h1.2v1.2h-1.2zM614.3 69.1h1.2v1.2h-1.2zM614.3 95.9h1.2v1.2h-1.2zM614.3 122.7h1.2v1.2h-1.2zM614.3 149.5h1.2v1.2h-1.2zM614.3 176.3h1.2v1.2h-1.2zM614.3 203.1h1.2v1.2h-1.2zM614.3 229.9h1.2v1.2h-1.2zM614.3 256.7h1.2v1.2h-1.2zM614.3 283.5h1.2v1.2h-1.2zM614.3 310.3h1.2v1.2h-1.2zM614.3 337.1h1.2v1.2h-1.2zM614.3 363.9h1.2v1.2h-1.2zM614.3 390.7h1.2v1.2h-1.2zM614.3 417.5h1.2v1.2h-1.2zM614.3 444.3h1.2v1.2h-1.2zM614.3 471.1h1.2v1.2h-1.2zM614.3 497.9h1.2v1.2h-1.2zM614.3 524.7h1.2v1.2h-1.2zM614.3 551.5h1.2v1.2h-1.2zM614.3 578.3h1.2v1.2h-1.2zM614.3 605.1h1.2v1.2h-1.2zM614.3 631.9h1.2v1.2h-1.2zM614.3 658.7h1.2v1.2h-1.2zM614.3 685.5h1.2v1.2h-1.2zM614.3 712.3h1.2v1.2h-1.2zM614.3 739.1h1.2v1.2h-1.2zM614.3 765.9h1.2v1.2h-1.2zM614.3 792.7h1.2v1.2h-1.2zM614.3 819.5h1.2v1.2h-1.2zM614.3 846.3h1.2v1.2h-1.2zM614.3 873.1h1.2v1.2h-1.2zM614.3 899.9h1.2v1.2h-1.2zM614.3 926.7h1.2v1.2h-1.2zM614.3 953.5h1.2v1.2h-1.2zM614.3 980.3h1.2v1.2h-1.2zM641.1 15.5h1.2v1.2h-1.2zM641.1 42.3h1.2v1.2h-1.2zM641.1 69.1h1.2v1.2h-1.2zM641.1 95.9h1.2v1.2h-1.2zM641.1 122.7h1.2v1.2h-1.2zM641.1 149.5h1.2v1.2h-1.2zM641.1 176.3h1.2v1.2h-1.2zM641.1 203.1h1.2v1.2h-1.2zM641.1 229.9h1.2v1.2h-1.2zM641.1 256.7h1.2v1.2h-1.2zM641.1 283.5h1.2v1.2h-1.2zM641.1 310.3h1.2v1.2h-1.2zM641.1 337.1h1.2v1.2h-1.2zM641.1 363.9h1.2v1.2h-1.2zM641.1 390.7h1.2v1.2h-1.2zM641.1 417.5h1.2v1.2h-1.2zM641.1 444.3h1.2v1.2h-1.2zM641.1 471.1h1.2v1.2h-1.2zM641.1 497.9h1.2v1.2h-1.2zM641.1 524.7h1.2v1.2h-1.2zM641.1 551.5h1.2v1.2h-1.2zM641.1 578.3h1.2v1.2h-1.2zM641.1 605.1h1.2v1.2h-1.2zM641.1 631.9h1.2v1.2h-1.2zM641.1 658.7h1.2v1.2h-1.2zM641.1 685.5h1.2v1.2h-1.2zM641.1 712.3h1.2v1.2h-1.2zM641.1 739.1h1.2v1.2h-1.2zM641.1 765.9h1.2v1.2h-1.2zM641.1 792.7h1.2v1.2h-1.2zM641.1 819.5h1.2v1.2h-1.2zM641.1 846.3h1.2v1.2h-1.2zM641.1 873.1h1.2v1.2h-1.2zM641.1 899.9h1.2v1.2h-1.2zM641.1 926.7h1.2v1.2h-1.2zM641.1 953.5h1.2v1.2h-1.2zM641.1 980.3h1.2v1.2h-1.2zM667.9 15.5h1.2v1.2h-1.2zM667.9 42.3h1.2v1.2h-1.2zM667.9 69.1h1.2v1.2h-1.2zM667.9 95.9h1.2v1.2h-1.2zM667.9 122.7h1.2v1.2h-1.2zM667.9 149.5h1.2v1.2h-1.2zM667.9 176.3h1.2v1.2h-1.2zM667.9 203.1h1.2v1.2h-1.2zM667.9 229.9h1.2v1.2h-1.2zM667.9 256.7h1.2v1.2h-1.2zM667.9 283.5h1.2v1.2h-1.2zM667.9 310.3h1.2v1.2h-1.2zM667.9 337.1h1.2v1.2h-1.2zM667.9 363.9h1.2v1.2h-1.2zM667.9 390.7h1.2v1.2h-1.2zM667.9 417.5h1.2v1.2h-1.2zM667.9 444.3h1.2v1.2h-1.2zM667.9 471.1h1.2v1.2h-1.2zM667.9 497.9h1.2v1.2h-1.2zM667.9 524.7h1.2v1.2h-1.2zM667.9 551.5h1.2v1.2h-1.2zM667.9 578.3h1.2v1.2h-1.2zM667.9 605.1h1.2v1.2h-1.2zM667.9 631.9h1.2v1.2h-1.2zM667.9 658.7h1.2v1.2h-1.2zM667.9 685.5h1.2v1.2h-1.2zM667.9 712.3h1.2v1.2h-1.2zM667.9 739.1h1.2v1.2h-1.2zM667.9 765.9h1.2v1.2h-1.2zM667.9 792.7h1.2v1.2h-1.2zM667.9 819.5h1.2v1.2h-1.2zM667.9 846.3h1.2v1.2h-1.2zM667.9 873.1h1.2v1.2h-1.2zM667.9 899.9h1.2v1.2h-1.2zM667.9 926.7h1.2v1.2h-1.2zM667.9 953.5h1.2v1.2h-1.2zM667.9 980.3h1.2v1.2h-1.2zM694.8 15.5h1.2v1.2h-1.2zM694.8 42.3h1.2v1.2h-1.2zM694.8 69.1h1.2v1.2h-1.2zM694.8 95.9h1.2v1.2h-1.2zM694.8 122.7h1.2v1.2h-1.2zM694.8 149.5h1.2v1.2h-1.2zM694.8 176.3h1.2v1.2h-1.2zM694.8 203.1h1.2v1.2h-1.2zM694.8 229.9h1.2v1.2h-1.2zM694.8 256.7h1.2v1.2h-1.2zM694.8 283.5h1.2v1.2h-1.2zM694.8 310.3h1.2v1.2h-1.2zM694.8 337.1h1.2v1.2h-1.2zM694.8 363.9h1.2v1.2h-1.2zM694.8 390.7h1.2v1.2h-1.2zM694.8 417.5h1.2v1.2h-1.2zM694.8 444.3h1.2v1.2h-1.2zM694.8 471.1h1.2v1.2h-1.2zM694.8 497.9h1.2v1.2h-1.2zM694.8 524.7h1.2v1.2h-1.2zM694.8 551.5h1.2v1.2h-1.2zM694.8 578.3h1.2v1.2h-1.2zM694.8 605.1h1.2v1.2h-1.2zM694.8 631.9h1.2v1.2h-1.2zM694.8 658.7h1.2v1.2h-1.2zM694.8 685.5h1.2v1.2h-1.2zM694.8 712.3h1.2v1.2h-1.2zM694.8 739.1h1.2v1.2h-1.2zM694.8 765.9h1.2v1.2h-1.2zM694.8 792.7h1.2v1.2h-1.2zM694.8 819.5h1.2v1.2h-1.2zM694.8 846.3h1.2v1.2h-1.2zM694.8 873.1h1.2v1.2h-1.2zM694.8 899.9h1.2v1.2h-1.2zM694.8 926.7h1.2v1.2h-1.2zM694.8 953.5h1.2v1.2h-1.2zM694.8 980.3h1.2v1.2h-1.2zM721.6 15.5h1.2v1.2h-1.2zM721.6 42.3h1.2v1.2h-1.2zM721.6 69.1h1.2v1.2h-1.2zM721.6 95.9h1.2v1.2h-1.2zM721.6 122.7h1.2v1.2h-1.2zM721.6 149.5h1.2v1.2h-1.2zM721.6 176.3h1.2v1.2h-1.2zM721.6 203.1h1.2v1.2h-1.2zM721.6 229.9h1.2v1.2h-1.2zM721.6 256.7h1.2v1.2h-1.2zM721.6 283.5h1.2v1.2h-1.2zM721.6 310.3h1.2v1.2h-1.2zM721.6 337.1h1.2v1.2h-1.2zM721.6 363.9h1.2v1.2h-1.2zM721.6 390.7h1.2v1.2h-1.2zM721.6 417.5h1.2v1.2h-1.2zM721.6 444.3h1.2v1.2h-1.2zM721.6 471.1h1.2v1.2h-1.2zM721.6 497.9h1.2v1.2h-1.2zM721.6 524.7h1.2v1.2h-1.2zM721.6 551.5h1.2v1.2h-1.2zM721.6 578.3h1.2v1.2h-1.2zM721.6 605.1h1.2v1.2h-1.2zM721.6 631.9h1.2v1.2h-1.2zM721.6 658.7h1.2v1.2h-1.2zM721.6 685.5h1.2v1.2h-1.2zM721.6 712.3h1.2v1.2h-1.2zM721.6 739.1h1.2v1.2h-1.2zM721.6 765.9h1.2v1.2h-1.2zM721.6 792.7h1.2v1.2h-1.2zM721.6 819.5h1.2v1.2h-1.2zM721.6 846.3h1.2v1.2h-1.2zM721.6 873.1h1.2v1.2h-1.2zM721.6 899.9h1.2v1.2h-1.2zM721.6 926.7h1.2v1.2h-1.2zM721.6 953.5h1.2v1.2h-1.2zM721.6 980.3h1.2v1.2h-1.2zM748.5 15.5h1.2v1.2h-1.2zM748.5 42.3h1.2v1.2h-1.2zM748.5 69.1h1.2v1.2h-1.2zM748.5 95.9h1.2v1.2h-1.2zM748.5 122.7h1.2v1.2h-1.2zM748.5 149.5h1.2v1.2h-1.2zM748.5 176.3h1.2v1.2h-1.2zM748.5 203.1h1.2v1.2h-1.2zM748.5 229.9h1.2v1.2h-1.2zM748.5 256.7h1.2v1.2h-1.2zM748.5 283.5h1.2v1.2h-1.2zM748.5 310.3h1.2v1.2h-1.2zM748.5 337.1h1.2v1.2h-1.2zM748.5 363.9h1.2v1.2h-1.2zM748.5 390.7h1.2v1.2h-1.2zM748.5 417.5h1.2v1.2h-1.2zM748.5 444.3h1.2v1.2h-1.2zM748.5 471.1h1.2v1.2h-1.2zM748.5 497.9h1.2v1.2h-1.2zM748.5 524.7h1.2v1.2h-1.2zM748.5 551.5h1.2v1.2h-1.2zM748.5 578.3h1.2v1.2h-1.2zM748.5 605.1h1.2v1.2h-1.2zM748.5 631.9h1.2v1.2h-1.2zM748.5 658.7h1.2v1.2h-1.2zM748.5 685.5h1.2v1.2h-1.2zM748.5 712.3h1.2v1.2h-1.2zM748.5 739.1h1.2v1.2h-1.2zM748.5 765.9h1.2v1.2h-1.2zM748.5 792.7h1.2v1.2h-1.2zM748.5 819.5h1.2v1.2h-1.2zM748.5 846.3h1.2v1.2h-1.2zM748.5 873.1h1.2v1.2h-1.2zM748.5 899.9h1.2v1.2h-1.2zM748.5 926.7h1.2v1.2h-1.2zM748.5 953.5h1.2v1.2h-1.2zM748.5 980.3h1.2v1.2h-1.2zM775.3 15.5h1.2v1.2h-1.2zM775.3 42.3h1.2v1.2h-1.2zM775.3 69.1h1.2v1.2h-1.2zM775.3 95.9h1.2v1.2h-1.2zM775.3 122.7h1.2v1.2h-1.2zM775.3 149.5h1.2v1.2h-1.2zM775.3 176.3h1.2v1.2h-1.2zM775.3 203.1h1.2v1.2h-1.2zM775.3 229.9h1.2v1.2h-1.2zM775.3 256.7h1.2v1.2h-1.2zM775.3 283.5h1.2v1.2h-1.2zM775.3 310.3h1.2v1.2h-1.2zM775.3 337.1h1.2v1.2h-1.2zM775.3 363.9h1.2v1.2h-1.2zM775.3 390.7h1.2v1.2h-1.2zM775.3 417.5h1.2v1.2h-1.2zM775.3 444.3h1.2v1.2h-1.2zM775.3 471.1h1.2v1.2h-1.2zM775.3 497.9h1.2v1.2h-1.2zM775.3 524.7h1.2v1.2h-1.2zM775.3 551.5h1.2v1.2h-1.2zM775.3 578.3h1.2v1.2h-1.2zM775.3 605.1h1.2v1.2h-1.2zM775.3 631.9h1.2v1.2h-1.2zM775.3 658.7h1.2v1.2h-1.2zM775.3 685.5h1.2v1.2h-1.2zM775.3 712.3h1.2v1.2h-1.2zM775.3 739.1h1.2v1.2h-1.2zM775.3 765.9h1.2v1.2h-1.2zM775.3 792.7h1.2v1.2h-1.2zM775.3 819.5h1.2v1.2h-1.2zM775.3 846.3h1.2v1.2h-1.2zM775.3 873.1h1.2v1.2h-1.2zM775.3 899.9h1.2v1.2h-1.2zM775.3 926.7h1.2v1.2h-1.2zM775.3 953.5h1.2v1.2h-1.2zM775.3 980.3h1.2v1.2h-1.2zM802.1 15.5h1.2v1.2h-1.2zM802.1 42.3h1.2v1.2h-1.2zM802.1 69.1h1.2v1.2h-1.2zM802.1 95.9h1.2v1.2h-1.2zM802.1 122.7h1.2v1.2h-1.2zM802.1 149.5h1.2v1.2h-1.2zM802.1 176.3h1.2v1.2h-1.2zM802.1 203.1h1.2v1.2h-1.2zM802.1 229.9h1.2v1.2h-1.2zM802.1 256.7h1.2v1.2h-1.2zM802.1 283.5h1.2v1.2h-1.2zM802.1 310.3h1.2v1.2h-1.2zM802.1 337.1h1.2v1.2h-1.2zM802.1 363.9h1.2v1.2h-1.2zM802.1 390.7h1.2v1.2h-1.2zM802.1 417.5h1.2v1.2h-1.2zM802.1 444.3h1.2v1.2h-1.2zM802.1 471.1h1.2v1.2h-1.2zM802.1 497.9h1.2v1.2h-1.2zM802.1 524.7h1.2v1.2h-1.2zM802.1 551.5h1.2v1.2h-1.2zM802.1 578.3h1.2v1.2h-1.2zM802.1 605.1h1.2v1.2h-1.2zM802.1 631.9h1.2v1.2h-1.2zM802.1 658.7h1.2v1.2h-1.2zM802.1 685.5h1.2v1.2h-1.2zM802.1 712.3h1.2v1.2h-1.2zM802.1 739.1h1.2v1.2h-1.2zM802.1 765.9h1.2v1.2h-1.2zM802.1 792.7h1.2v1.2h-1.2zM802.1 819.5h1.2v1.2h-1.2zM802.1 846.3h1.2v1.2h-1.2zM802.1 873.1h1.2v1.2h-1.2zM802.1 899.9h1.2v1.2h-1.2zM802.1 926.7h1.2v1.2h-1.2zM802.1 953.5h1.2v1.2h-1.2zM802.1 980.3h1.2v1.2h-1.2zM829.0 15.5h1.2v1.2h-1.2zM829.0 42.3h1.2v1.2h-1.2zM829.0 69.1h1.2v1.2h-1.2zM829.0 95.9h1.2v1.2h-1.2zM829.0 122.7h1.2v1.2h-1.2zM829.0 149.5h1.2v1.2h-1.2zM829.0 176.3h1.2v1.2h-1.2zM829.0 203.1h1.2v1.2h-1.2zM829.0 229.9h1.2v1.2h-1.2zM829.0 256.7h1.2v1.2h-1.2zM829.0 283.5h1.2v1.2h-1.2zM829.0 310.3h1.2v1.2h-1.2zM829.0 337.1h1.2v1.2h-1.2zM829.0 363.9h1.2v1.2h-1.2zM829.0 390.7h1.2v1.2h-1.2zM829.0 417.5h1.2v1.2h-1.2zM829.0 444.3h1.2v1.2h-1.2zM829.0 471.1h1.2v1.2h-1.2zM829.0 497.9h1.2v1.2h-1.2zM829.0 524.7h1.2v1.2h-1.2zM829.0 551.5h1.2v1.2h-1.2zM829.0 578.3h1.2v1.2h-1.2zM829.0 605.1h1.2v1.2h-1.2zM829.0 631.9h1.2v1.2h-1.2zM829.0 658.7h1.2v1.2h-1.2zM829.0 685.5h1.2v1.2h-1.2zM829.0 712.3h1.2v1.2h-1.2zM829.0 739.1h1.2v1.2h-1.2zM829.0 765.9h1.2v1.2h-1.2zM829.0 792.7h1.2v1.2h-1.2zM829.0 819.5h1.2v1.2h-1.2zM829.0 846.3h1.2v1.2h-1.2zM829.0 873.1h1.2v1.2h-1.2zM829.0 899.9h1.2v1.2h-1.2zM829.0 926.7h1.2v1.2h-1.2zM829.0 953.5h1.2v1.2h-1.2zM829.0 980.3h1.2v1.2h-1.2z" fill="#b9b9b6"/><line x1="339.00" y1="8.00" x2="473.20" y2="8.00" stroke="#009600" stroke-width="2.2" stroke-linecap="butt"/><line x1="526.88" y1="8.00" x2="714.76" y2="8.00" stroke="#009600" stroke-width="2.2" stroke-linecap="butt"/><line x1="339.00" y1="7.00" x2="339.00" y2="23.00" stroke="#009600" stroke-width="2.2" stroke-linecap="butt"/><line x1="714.76" y1="7.00" x2="714.76" y2="23.00" stroke="#009600" stroke-width="2.2" stroke-linecap="butt"/><line x1="473.20" y1="0.00" x2="473.20" y2="23.00" stroke="#009600" stroke-width="2.2" stroke-linecap="butt"/><line x1="526.88" y1="0.00" x2="526.88" y2="23.00" stroke="#009600" stroke-width="2.2" stroke-linecap="butt"/><line x1="365.84" y1="8.00" x2="365.84" y2="23.00" stroke="#009600" stroke-width="2.2" stroke-linecap="butt"/><line x1="392.68" y1="8.00" x2="392.68" y2="23.00" stroke="#009600" stroke-width="2.2" stroke-linecap="butt"/><line x1="419.52" y1="8.00" x2="419.52" y2="23.00" stroke="#009600" stroke-width="2.2" stroke-linecap="butt"/><line x1="446.36" y1="8.00" x2="446.36" y2="23.00" stroke="#009600" stroke-width="2.2" stroke-linecap="butt"/><line x1="553.72" y1="8.00" x2="553.72" y2="23.00" stroke="#009600" stroke-width="2.2" stroke-linecap="butt"/><line x1="580.56" y1="8.00" x2="580.56" y2="23.00" stroke="#009600" stroke-width="2.2" stroke-linecap="butt"/><line x1="607.40" y1="8.00" x2="607.40" y2="23.00" stroke="#009600" stroke-width="2.2" stroke-linecap="butt"/><line x1="634.24" y1="8.00" x2="634.24" y2="23.00" stroke="#009600" stroke-width="2.2" stroke-linecap="butt"/><line x1="661.08" y1="8.00" x2="661.08" y2="23.00" stroke="#009600" stroke-width="2.2" stroke-linecap="butt"/><line x1="687.92" y1="8.00" x2="687.92" y2="23.00" stroke="#009600" stroke-width="2.2" stroke-linecap="butt"/><circle cx="365.84" cy="8" r="4.6" fill="#009600"/><circle cx="392.68" cy="8" r="4.6" fill="#009600"/><circle cx="419.52" cy="8" r="4.6" fill="#009600"/><circle cx="446.36" cy="8" r="4.6" fill="#009600"/><circle cx="473.20" cy="8" r="4.6" fill="#009600"/><circle cx="526.88" cy="8" r="4.6" fill="#009600"/><circle cx="553.72" cy="8" r="4.6" fill="#009600"/><circle cx="580.56" cy="8" r="4.6" fill="#009600"/><circle cx="607.40" cy="8" r="4.6" fill="#009600"/><circle cx="634.24" cy="8" r="4.6" fill="#009600"/><circle cx="661.08" cy="8" r="4.6" fill="#009600"/><circle cx="687.92" cy="8" r="4.6" fill="#009600"/><line x1="339.00" y1="23.00" x2="339.00" y2="74.65" stroke="#840000" stroke-width="1.9" stroke-linecap="butt"/><line x1="365.84" y1="23.00" x2="365.84" y2="74.65" stroke="#840000" stroke-width="1.9" stroke-linecap="butt"/><line x1="392.68" y1="23.00" x2="392.68" y2="74.65" stroke="#840000" stroke-width="1.9" stroke-linecap="butt"/><line x1="419.52" y1="23.00" x2="419.52" y2="74.65" stroke="#840000" stroke-width="1.9" stroke-linecap="butt"/><line x1="446.36" y1="23.00" x2="446.36" y2="74.65" stroke="#840000" stroke-width="1.9" stroke-linecap="butt"/><line x1="473.20" y1="23.00" x2="473.20" y2="74.65" stroke="#840000" stroke-width="1.9" stroke-linecap="butt"/><line x1="526.88" y1="23.00" x2="526.88" y2="74.65" stroke="#840000" stroke-width="1.9" stroke-linecap="butt"/><line x1="553.72" y1="23.00" x2="553.72" y2="74.65" stroke="#840000" stroke-width="1.9" stroke-linecap="butt"/><line x1="580.56" y1="23.00" x2="580.56" y2="74.65" stroke="#840000" stroke-width="1.9" stroke-linecap="butt"/><line x1="607.40" y1="23.00" x2="607.40" y2="74.65" stroke="#840000" stroke-width="1.9" stroke-linecap="butt"/><line x1="634.24" y1="23.00" x2="634.24" y2="74.65" stroke="#840000" stroke-width="1.9" stroke-linecap="butt"/><line x1="661.08" y1="23.00" x2="661.08" y2="74.65" stroke="#840000" stroke-width="1.9" stroke-linecap="butt"/><line x1="687.92" y1="23.00" x2="687.92" y2="74.65" stroke="#840000" stroke-width="1.9" stroke-linecap="butt"/><line x1="714.76" y1="23.00" x2="714.76" y2="74.65" stroke="#840000" stroke-width="1.9" stroke-linecap="butt"/><rect x="286.45" y="74.65" width="455.05" height="776.75" fill="#ffffc2" stroke="#840000" stroke-width="2.9"/><text x="336.40" y="48.50" font-family="Liberation Sans" font-size="23" fill="#a90000" text-anchor="middle" font-weight="normal" stroke="#a90000" stroke-width="0.2" textLength="23.1" lengthAdjust="spacingAndGlyphs" transform="rotate(-90 336.40 48.50)">30</text><text x="346.50" y="85.65" font-family="Liberation Sans" font-size="23" fill="#006464" text-anchor="end" font-weight="normal" stroke="#006464" stroke-width="0.2" textLength="35.7" lengthAdjust="spacingAndGlyphs" transform="rotate(-90 346.50 85.65)">VDD</text><text x="363.24" y="48.50" font-family="Liberation Sans" font-size="23" fill="#a90000" text-anchor="middle" font-weight="normal" stroke="#a90000" stroke-width="0.2" textLength="23.1" lengthAdjust="spacingAndGlyphs" transform="rotate(-90 363.24 48.50)">34</text><text x="373.34" y="85.65" font-family="Liberation Sans" font-size="23" fill="#006464" text-anchor="end" font-weight="normal" stroke="#006464" stroke-width="0.2" textLength="35.7" lengthAdjust="spacingAndGlyphs" transform="rotate(-90 373.34 85.65)">VDD</text><text x="390.08" y="48.50" font-family="Liberation Sans" font-size="23" fill="#a90000" text-anchor="middle" font-weight="normal" stroke="#a90000" stroke-width="0.2" textLength="23.1" lengthAdjust="spacingAndGlyphs" transform="rotate(-90 390.08 48.50)">45</text><text x="400.18" y="85.65" font-family="Liberation Sans" font-size="23" fill="#006464" text-anchor="end" font-weight="normal" stroke="#006464" stroke-width="0.2" textLength="35.7" lengthAdjust="spacingAndGlyphs" transform="rotate(-90 400.18 85.65)">VDD</text><text x="416.92" y="48.50" font-family="Liberation Sans" font-size="23" fill="#a90000" text-anchor="middle" font-weight="normal" stroke="#a90000" stroke-width="0.2" textLength="23.1" lengthAdjust="spacingAndGlyphs" transform="rotate(-90 416.92 48.50)">18</text><text x="427.02" y="85.65" font-family="Liberation Sans" font-size="23" fill="#006464" text-anchor="end" font-weight="normal" stroke="#006464" stroke-width="0.2" textLength="35.7" lengthAdjust="spacingAndGlyphs" transform="rotate(-90 427.02 85.65)">VDD</text><text x="443.76" y="48.50" font-family="Liberation Sans" font-size="23" fill="#a90000" text-anchor="middle" font-weight="normal" stroke="#a90000" stroke-width="0.2" textLength="10.6" lengthAdjust="spacingAndGlyphs" transform="rotate(-90 443.76 48.50)">1</text><text x="453.86" y="85.65" font-family="Liberation Sans" font-size="23" fill="#006464" text-anchor="end" font-weight="normal" stroke="#006464" stroke-width="0.2" textLength="35.7" lengthAdjust="spacingAndGlyphs" transform="rotate(-90 453.86 85.65)">VDD</text><text x="470.60" y="48.50" font-family="Liberation Sans" font-size="23" fill="#a90000" text-anchor="middle" font-weight="normal" stroke="#a90000" stroke-width="0.2" textLength="23.1" lengthAdjust="spacingAndGlyphs" transform="rotate(-90 470.60 48.50)">12</text><text x="480.70" y="85.65" font-family="Liberation Sans" font-size="23" fill="#006464" text-anchor="end" font-weight="normal" stroke="#006464" stroke-width="0.2" textLength="35.7" lengthAdjust="spacingAndGlyphs" transform="rotate(-90 480.70 85.65)">VDD</text><text x="524.28" y="48.50" font-family="Liberation Sans" font-size="23" fill="#a90000" text-anchor="middle" font-weight="normal" stroke="#a90000" stroke-width="0.2" textLength="10.6" lengthAdjust="spacingAndGlyphs" transform="rotate(-90 524.28 48.50)">7</text><text x="534.38" y="85.65" font-family="Liberation Sans" font-size="23" fill="#006464" text-anchor="end" font-weight="normal" stroke="#006464" stroke-width="0.2" textLength="60.8" lengthAdjust="spacingAndGlyphs" transform="rotate(-90 534.38 85.65)">VDD33</text><text x="551.12" y="48.50" font-family="Liberation Sans" font-size="23" fill="#a90000" text-anchor="middle" font-weight="normal" stroke="#a90000" stroke-width="0.2" textLength="23.1" lengthAdjust="spacingAndGlyphs" transform="rotate(-90 551.12 48.50)">13</text><text x="561.22" y="85.65" font-family="Liberation Sans" font-size="23" fill="#006464" text-anchor="end" font-weight="normal" stroke="#006464" stroke-width="0.2" textLength="60.8" lengthAdjust="spacingAndGlyphs" transform="rotate(-90 561.22 85.65)">VDD33</text><text x="577.96" y="48.50" font-family="Liberation Sans" font-size="23" fill="#a90000" text-anchor="middle" font-weight="normal" stroke="#a90000" stroke-width="0.2" textLength="23.1" lengthAdjust="spacingAndGlyphs" transform="rotate(-90 577.96 48.50)">23</text><text x="588.06" y="85.65" font-family="Liberation Sans" font-size="23" fill="#006464" text-anchor="end" font-weight="normal" stroke="#006464" stroke-width="0.2" textLength="60.8" lengthAdjust="spacingAndGlyphs" transform="rotate(-90 588.06 85.65)">VDD33</text><text x="604.80" y="48.50" font-family="Liberation Sans" font-size="23" fill="#a90000" text-anchor="middle" font-weight="normal" stroke="#a90000" stroke-width="0.2" textLength="23.1" lengthAdjust="spacingAndGlyphs" transform="rotate(-90 604.80 48.50)">48</text><text x="614.90" y="85.65" font-family="Liberation Sans" font-size="23" fill="#006464" text-anchor="end" font-weight="normal" stroke="#006464" stroke-width="0.2" textLength="60.8" lengthAdjust="spacingAndGlyphs" transform="rotate(-90 614.90 85.65)">VDD33</text><text x="631.64" y="48.50" font-family="Liberation Sans" font-size="23" fill="#a90000" text-anchor="middle" font-weight="normal" stroke="#a90000" stroke-width="0.2" textLength="23.1" lengthAdjust="spacingAndGlyphs" transform="rotate(-90 631.64 48.50)">40</text><text x="641.74" y="85.65" font-family="Liberation Sans" font-size="23" fill="#006464" text-anchor="end" font-weight="normal" stroke="#006464" stroke-width="0.2" textLength="60.8" lengthAdjust="spacingAndGlyphs" transform="rotate(-90 641.74 85.65)">VDD33</text><text x="658.48" y="48.50" font-family="Liberation Sans" font-size="23" fill="#a90000" text-anchor="middle" font-weight="normal" stroke="#a90000" stroke-width="0.2" textLength="23.1" lengthAdjust="spacingAndGlyphs" transform="rotate(-90 658.48 48.50)">37</text><text x="668.58" y="85.65" font-family="Liberation Sans" font-size="23" fill="#006464" text-anchor="end" font-weight="normal" stroke="#006464" stroke-width="0.2" textLength="60.8" lengthAdjust="spacingAndGlyphs" transform="rotate(-90 668.58 85.65)">VDD33</text><text x="685.32" y="48.50" font-family="Liberation Sans" font-size="23" fill="#a90000" text-anchor="middle" font-weight="normal" stroke="#a90000" stroke-width="0.2" textLength="23.1" lengthAdjust="spacingAndGlyphs" transform="rotate(-90 685.32 48.50)">33</text><text x="695.42" y="85.65" font-family="Liberation Sans" font-size="23" fill="#006464" text-anchor="end" font-weight="normal" stroke="#006464" stroke-width="0.2" textLength="60.8" lengthAdjust="spacingAndGlyphs" transform="rotate(-90 695.42 85.65)">VDD33</text><text x="712.16" y="48.50" font-family="Liberation Sans" font-size="23" fill="#a90000" text-anchor="middle" font-weight="normal" stroke="#a90000" stroke-width="0.2" textLength="23.1" lengthAdjust="spacingAndGlyphs" transform="rotate(-90 712.16 48.50)">25</text><text x="722.26" y="85.65" font-family="Liberation Sans" font-size="23" fill="#006464" text-anchor="end" font-weight="normal" stroke="#006464" stroke-width="0.2" textLength="60.8" lengthAdjust="spacingAndGlyphs" transform="rotate(-90 722.26 85.65)">VDD33</text><text x="283.50" y="72.00" font-family="Liberation Sans" font-size="23.5" fill="#006464" text-anchor="start" font-weight="normal" stroke="#006464" stroke-width="0.2" textLength="23.0" lengthAdjust="spacingAndGlyphs">U2</text><line x1="232.85" y1="155.60" x2="286.45" y2="155.60" stroke="#840000" stroke-width="1.9" stroke-linecap="butt"/><text x="259.65" y="153.20" font-family="Liberation Sans" font-size="23" fill="#a90000" text-anchor="middle" font-weight="normal" stroke="#a90000" stroke-width="0.2" textLength="10.6" lengthAdjust="spacingAndGlyphs">9</text><text x="295.95" y="162.90" font-family="Liberation Sans" font-size="23" fill="#006464" text-anchor="start" font-weight="normal" stroke="#006464" stroke-width="0.2" textLength="98.4" lengthAdjust="spacingAndGlyphs">USB_VBUS</text><line x1="232.85" y1="209.20" x2="286.45" y2="209.20" stroke="#840000" stroke-width="1.9" stroke-linecap="butt"/><text x="259.65" y="206.80" font-family="Liberation Sans" font-size="23" fill="#a90000" text-anchor="middle" font-weight="normal" stroke="#a90000" stroke-width="0.2" textLength="23.1" lengthAdjust="spacingAndGlyphs">29</text><text x="295.95" y="216.50" font-family="Liberation Sans" font-size="23" fill="#006464" text-anchor="start" font-weight="normal" stroke="#006464" stroke-width="0.2" textLength="148.6" lengthAdjust="spacingAndGlyphs">USB_SSTXP_UP</text><line x1="232.85" y1="236.00" x2="286.45" y2="236.00" stroke="#840000" stroke-width="1.9" stroke-linecap="butt"/><text x="259.65" y="233.60" font-family="Liberation Sans" font-size="23" fill="#a90000" text-anchor="middle" font-weight="normal" stroke="#a90000" stroke-width="0.2" textLength="23.1" lengthAdjust="spacingAndGlyphs">28</text><text x="295.95" y="243.30" font-family="Liberation Sans" font-size="23" fill="#006464" text-anchor="start" font-weight="normal" stroke="#006464" stroke-width="0.2" textLength="151.1" lengthAdjust="spacingAndGlyphs">USB_SSTXM_UP</text><line x1="232.85" y1="276.20" x2="286.45" y2="276.20" stroke="#840000" stroke-width="1.9" stroke-linecap="butt"/><text x="259.65" y="273.80" font-family="Liberation Sans" font-size="23" fill="#a90000" text-anchor="middle" font-weight="normal" stroke="#a90000" stroke-width="0.2" textLength="23.1" lengthAdjust="spacingAndGlyphs">32</text><text x="295.95" y="283.50" font-family="Liberation Sans" font-size="23" fill="#006464" text-anchor="start" font-weight="normal" stroke="#006464" stroke-width="0.2" textLength="148.6" lengthAdjust="spacingAndGlyphs">USB_SSRXP_UP</text><line x1="232.85" y1="303.00" x2="286.45" y2="303.00" stroke="#840000" stroke-width="1.9" stroke-linecap="butt"/><text x="259.65" y="300.60" font-family="Liberation Sans" font-size="23" fill="#a90000" text-anchor="middle" font-weight="normal" stroke="#a90000" stroke-width="0.2" textLength="23.1" lengthAdjust="spacingAndGlyphs">31</text><text x="295.95" y="310.30" font-family="Liberation Sans" font-size="23" fill="#006464" text-anchor="start" font-weight="normal" stroke="#006464" stroke-width="0.2" textLength="151.1" lengthAdjust="spacingAndGlyphs">USB_SSRXM_UP</text><line x1="232.85" y1="343.20" x2="286.45" y2="343.20" stroke="#840000" stroke-width="1.9" stroke-linecap="butt"/><text x="259.65" y="340.80" font-family="Liberation Sans" font-size="23" fill="#a90000" text-anchor="middle" font-weight="normal" stroke="#a90000" stroke-width="0.2" textLength="23.1" lengthAdjust="spacingAndGlyphs">26</text><text x="295.95" y="350.50" font-family="Liberation Sans" font-size="23" fill="#006464" text-anchor="start" font-weight="normal" stroke="#006464" stroke-width="0.2" textLength="110.9" lengthAdjust="spacingAndGlyphs">USB_DP_UP</text><line x1="232.85" y1="370.00" x2="286.45" y2="370.00" stroke="#840000" stroke-width="1.9" stroke-linecap="butt"/><text x="259.65" y="367.60" font-family="Liberation Sans" font-size="23" fill="#a90000" text-anchor="middle" font-weight="normal" stroke="#a90000" stroke-width="0.2" textLength="23.1" lengthAdjust="spacingAndGlyphs">27</text><text x="295.95" y="377.30" font-family="Liberation Sans" font-size="23" fill="#006464" text-anchor="start" font-weight="normal" stroke="#006464" stroke-width="0.2" textLength="113.4" lengthAdjust="spacingAndGlyphs">USB_DM_UP</text><line x1="246.25" y1="463.80" x2="299.85" y2="463.80" stroke="#840000" stroke-width="1.9" stroke-linecap="butt"/><text x="273.05" y="461.40" font-family="Liberation Sans" font-size="23" fill="#a90000" text-anchor="middle" font-weight="normal" stroke="#a90000" stroke-width="0.2" textLength="23.1" lengthAdjust="spacingAndGlyphs">35</text><text x="309.35" y="471.10" font-family="Liberation Sans" font-size="23" fill="#006464" text-anchor="start" font-weight="normal" stroke="#006464" stroke-width="0.2" textLength="226.4" lengthAdjust="spacingAndGlyphs">GANGED/SMBA2/HS_UP</text><line x1="246.25" y1="517.40" x2="299.85" y2="517.40" stroke="#840000" stroke-width="1.9" stroke-linecap="butt"/><text x="273.05" y="515.00" font-family="Liberation Sans" font-size="23" fill="#a90000" text-anchor="middle" font-weight="normal" stroke="#a90000" stroke-width="0.2" textLength="23.1" lengthAdjust="spacingAndGlyphs">38</text><text x="309.35" y="524.70" font-family="Liberation Sans" font-size="23" fill="#006464" text-anchor="start" font-weight="normal" stroke="#006464" stroke-width="0.2" textLength="16.6" lengthAdjust="spacingAndGlyphs">XI</text><line x1="246.25" y1="544.20" x2="299.85" y2="544.20" stroke="#840000" stroke-width="1.9" stroke-linecap="butt"/><text x="273.05" y="541.80" font-family="Liberation Sans" font-size="23" fill="#a90000" text-anchor="middle" font-weight="normal" stroke="#a90000" stroke-width="0.2" textLength="23.1" lengthAdjust="spacingAndGlyphs">39</text><text x="309.35" y="551.50" font-family="Liberation Sans" font-size="23" fill="#006464" text-anchor="start" font-weight="normal" stroke="#006464" stroke-width="0.2" textLength="23.1" lengthAdjust="spacingAndGlyphs">XO</text><line x1="246.25" y1="611.20" x2="299.85" y2="611.20" stroke="#840000" stroke-width="1.9" stroke-linecap="butt"/><text x="273.05" y="608.80" font-family="Liberation Sans" font-size="23" fill="#a90000" text-anchor="middle" font-weight="normal" stroke="#a90000" stroke-width="0.2" textLength="23.1" lengthAdjust="spacingAndGlyphs">11</text><text x="309.35" y="618.50" font-family="Liberation Sans" font-size="23" fill="#006464" text-anchor="start" font-weight="normal" stroke="#006464" stroke-width="0.2" textLength="60.8" lengthAdjust="spacingAndGlyphs">GRSTZ</text><line x1="246.25" y1="664.80" x2="299.85" y2="664.80" stroke="#840000" stroke-width="1.9" stroke-linecap="butt"/><text x="273.05" y="662.40" font-family="Liberation Sans" font-size="23" fill="#a90000" text-anchor="middle" font-weight="normal" stroke="#a90000" stroke-width="0.2" textLength="10.6" lengthAdjust="spacingAndGlyphs">3</text><text x="309.35" y="672.10" font-family="Liberation Sans" font-size="23" fill="#006464" text-anchor="start" font-weight="normal" stroke="#006464" stroke-width="0.2" textLength="125.9" lengthAdjust="spacingAndGlyphs">SDA/SMBDAT</text><line x1="246.25" y1="691.60" x2="299.85" y2="691.60" stroke="#840000" stroke-width="1.9" stroke-linecap="butt"/><text x="273.05" y="689.20" font-family="Liberation Sans" font-size="23" fill="#a90000" text-anchor="middle" font-weight="normal" stroke="#a90000" stroke-width="0.2" textLength="10.6" lengthAdjust="spacingAndGlyphs">2</text><text x="309.35" y="698.90" font-family="Liberation Sans" font-size="23" fill="#006464" text-anchor="start" font-weight="normal" stroke="#006464" stroke-width="0.2" textLength="125.9" lengthAdjust="spacingAndGlyphs">SCL/SMBCLK</text><line x1="246.25" y1="758.60" x2="299.85" y2="758.60" stroke="#840000" stroke-width="1.9" stroke-linecap="butt"/><text x="273.05" y="756.20" font-family="Liberation Sans" font-size="23" fill="#a90000" text-anchor="middle" font-weight="normal" stroke="#a90000" stroke-width="0.2" textLength="23.1" lengthAdjust="spacingAndGlyphs">10</text><text x="309.35" y="765.90" font-family="Liberation Sans" font-size="23" fill="#006464" text-anchor="start" font-weight="normal" stroke="#006464" stroke-width="0.2" textLength="48.2" lengthAdjust="spacingAndGlyphs">TEST</text><line x1="232.85" y1="798.80" x2="286.45" y2="798.80" stroke="#840000" stroke-width="1.9" stroke-linecap="butt"/><text x="259.65" y="796.40" font-family="Liberation Sans" font-size="23" fill="#a90000" text-anchor="middle" font-weight="normal" stroke="#a90000" stroke-width="0.2" textLength="23.1" lengthAdjust="spacingAndGlyphs">24</text><text x="295.95" y="806.10" font-family="Liberation Sans" font-size="23" fill="#006464" text-anchor="start" font-weight="normal" stroke="#006464" stroke-width="0.2" textLength="73.3" lengthAdjust="spacingAndGlyphs">USB_R1</text><line x1="741.50" y1="182.40" x2="794.30" y2="182.40" stroke="#840000" stroke-width="1.9" stroke-linecap="butt"/><text x="768.90" y="180.00" font-family="Liberation Sans" font-size="23" fill="#a90000" text-anchor="middle" font-weight="normal" stroke="#a90000" stroke-width="0.2" textLength="23.1" lengthAdjust="spacingAndGlyphs">43</text><text x="732.00" y="189.70" font-family="Liberation Sans" font-size="23" fill="#006464" text-anchor="end" font-weight="normal" stroke="#006464" stroke-width="0.2" textLength="161.2" lengthAdjust="spacingAndGlyphs">USB_SSTXP_DN1</text><line x1="794.30" y1="182.40" x2="836.00" y2="182.40" stroke="#009600" stroke-width="2.2" stroke-linecap="butt"/><line x1="741.50" y1="209.20" x2="794.30" y2="209.20" stroke="#840000" stroke-width="1.9" stroke-linecap="butt"/><text x="768.90" y="206.80" font-family="Liberation Sans" font-size="23" fill="#a90000" text-anchor="middle" font-weight="normal" stroke="#a90000" stroke-width="0.2" textLength="23.1" lengthAdjust="spacingAndGlyphs">44</text><text x="732.00" y="216.50" font-family="Liberation Sans" font-size="23" fill="#006464" text-anchor="end" font-weight="normal" stroke="#006464" stroke-width="0.2" textLength="163.6" lengthAdjust="spacingAndGlyphs">USB_SSTXM_DN1</text><line x1="794.30" y1="209.20" x2="836.00" y2="209.20" stroke="#009600" stroke-width="2.2" stroke-linecap="butt"/><line x1="741.50" y1="249.40" x2="794.30" y2="249.40" stroke="#840000" stroke-width="1.9" stroke-linecap="butt"/><text x="768.90" y="247.00" font-family="Liberation Sans" font-size="23" fill="#a90000" text-anchor="middle" font-weight="normal" stroke="#a90000" stroke-width="0.2" textLength="23.1" lengthAdjust="spacingAndGlyphs">46</text><text x="732.00" y="256.70" font-family="Liberation Sans" font-size="23" fill="#006464" text-anchor="end" font-weight="normal" stroke="#006464" stroke-width="0.2" textLength="161.2" lengthAdjust="spacingAndGlyphs">USB_SSRXP_DN1</text><line x1="794.30" y1="249.40" x2="836.00" y2="249.40" stroke="#009600" stroke-width="2.2" stroke-linecap="butt"/><line x1="741.50" y1="276.20" x2="794.30" y2="276.20" stroke="#840000" stroke-width="1.9" stroke-linecap="butt"/><text x="768.90" y="273.80" font-family="Liberation Sans" font-size="23" fill="#a90000" text-anchor="middle" font-weight="normal" stroke="#a90000" stroke-width="0.2" textLength="23.1" lengthAdjust="spacingAndGlyphs">47</text><text x="732.00" y="283.50" font-family="Liberation Sans" font-size="23" fill="#006464" text-anchor="end" font-weight="normal" stroke="#006464" stroke-width="0.2" textLength="163.6" lengthAdjust="spacingAndGlyphs">USB_SSRXM_DN1</text><line x1="794.30" y1="276.20" x2="836.00" y2="276.20" stroke="#009600" stroke-width="2.2" stroke-linecap="butt"/><line x1="741.50" y1="316.40" x2="794.30" y2="316.40" stroke="#840000" stroke-width="1.9" stroke-linecap="butt"/><text x="768.90" y="314.00" font-family="Liberation Sans" font-size="23" fill="#a90000" text-anchor="middle" font-weight="normal" stroke="#a90000" stroke-width="0.2" textLength="23.1" lengthAdjust="spacingAndGlyphs">41</text><text x="732.00" y="323.70" font-family="Liberation Sans" font-size="23" fill="#006464" text-anchor="end" font-weight="normal" stroke="#006464" stroke-width="0.2" textLength="123.5" lengthAdjust="spacingAndGlyphs">USB_DP_DN1</text><line x1="794.30" y1="316.40" x2="836.00" y2="316.40" stroke="#009600" stroke-width="2.2" stroke-linecap="butt"/><line x1="741.50" y1="343.20" x2="794.30" y2="343.20" stroke="#840000" stroke-width="1.9" stroke-linecap="butt"/><text x="768.90" y="340.80" font-family="Liberation Sans" font-size="23" fill="#a90000" text-anchor="middle" font-weight="normal" stroke="#a90000" stroke-width="0.2" textLength="23.1" lengthAdjust="spacingAndGlyphs">42</text><text x="732.00" y="350.50" font-family="Liberation Sans" font-size="23" fill="#006464" text-anchor="end" font-weight="normal" stroke="#006464" stroke-width="0.2" textLength="125.9" lengthAdjust="spacingAndGlyphs">USB_DM_DN1</text><line x1="794.30" y1="343.20" x2="836.00" y2="343.20" stroke="#009600" stroke-width="2.2" stroke-linecap="butt"/><line x1="741.50" y1="383.40" x2="794.30" y2="383.40" stroke="#840000" stroke-width="1.9" stroke-linecap="butt"/><text x="768.90" y="381.00" font-family="Liberation Sans" font-size="23" fill="#a90000" text-anchor="middle" font-weight="normal" stroke="#a90000" stroke-width="0.2" textLength="10.6" lengthAdjust="spacingAndGlyphs">4</text><text x="732.00" y="390.70" font-family="Liberation Sans" font-size="23" fill="#006464" text-anchor="end" font-weight="normal" stroke="#006464" stroke-width="0.2" textLength="176.2" lengthAdjust="spacingAndGlyphs">PWRCTL1/BATEN1</text><path d="M787.8 376.9l13 13M787.8 389.9l13 -13" stroke="#000084" stroke-width="1.9"/><line x1="741.50" y1="410.20" x2="794.30" y2="410.20" stroke="#840000" stroke-width="1.9" stroke-linecap="butt"/><text x="768.90" y="407.80" font-family="Liberation Sans" font-size="23" fill="#a90000" text-anchor="middle" font-weight="normal" stroke="#a90000" stroke-width="0.2" textLength="10.6" lengthAdjust="spacingAndGlyphs">5</text><text x="732.00" y="417.50" font-family="Liberation Sans" font-size="23" fill="#006464" text-anchor="end" font-weight="normal" stroke="#006464" stroke-width="0.2" textLength="110.9" lengthAdjust="spacingAndGlyphs">OVERCUR1Z</text><line x1="794.30" y1="410.20" x2="836.00" y2="410.20" stroke="#009600" stroke-width="2.2" stroke-linecap="butt"/><line x1="741.50" y1="437.00" x2="794.30" y2="437.00" stroke="#840000" stroke-width="1.9" stroke-linecap="butt"/><text x="768.90" y="434.60" font-family="Liberation Sans" font-size="23" fill="#a90000" text-anchor="middle" font-weight="normal" stroke="#a90000" stroke-width="0.2" textLength="23.1" lengthAdjust="spacingAndGlyphs">21</text><text x="732.00" y="444.30" font-family="Liberation Sans" font-size="23" fill="#006464" text-anchor="end" font-weight="normal" stroke="#006464" stroke-width="0.2" textLength="213.8" lengthAdjust="spacingAndGlyphs">PWRCTL_POL/SS_DN1</text><line x1="794.30" y1="437.00" x2="836.00" y2="437.00" stroke="#009600" stroke-width="2.2" stroke-linecap="butt"/><line x1="741.50" y1="490.60" x2="794.30" y2="490.60" stroke="#840000" stroke-width="1.9" stroke-linecap="butt"/><text x="768.90" y="488.20" font-family="Liberation Sans" font-size="23" fill="#a90000" text-anchor="middle" font-weight="normal" stroke="#a90000" stroke-width="0.2" textLength="23.1" lengthAdjust="spacingAndGlyphs">16</text><text x="732.00" y="497.90" font-family="Liberation Sans" font-size="23" fill="#006464" text-anchor="end" font-weight="normal" stroke="#006464" stroke-width="0.2" textLength="161.2" lengthAdjust="spacingAndGlyphs">USB_SSTXP_DN2</text><path d="M787.8 484.1l13 13M787.8 497.1l13 -13" stroke="#000084" stroke-width="1.9"/><line x1="741.50" y1="517.40" x2="794.30" y2="517.40" stroke="#840000" stroke-width="1.9" stroke-linecap="butt"/><text x="768.90" y="515.00" font-family="Liberation Sans" font-size="23" fill="#a90000" text-anchor="middle" font-weight="normal" stroke="#a90000" stroke-width="0.2" textLength="23.1" lengthAdjust="spacingAndGlyphs">17</text><text x="732.00" y="524.70" font-family="Liberation Sans" font-size="23" fill="#006464" text-anchor="end" font-weight="normal" stroke="#006464" stroke-width="0.2" textLength="163.6" lengthAdjust="spacingAndGlyphs">USB_SSTXM_DN2</text><path d="M787.8 510.9l13 13M787.8 523.9l13 -13" stroke="#000084" stroke-width="1.9"/><line x1="741.50" y1="557.60" x2="794.30" y2="557.60" stroke="#840000" stroke-width="1.9" stroke-linecap="butt"/><text x="768.90" y="555.20" font-family="Liberation Sans" font-size="23" fill="#a90000" text-anchor="middle" font-weight="normal" stroke="#a90000" stroke-width="0.2" textLength="23.1" lengthAdjust="spacingAndGlyphs">19</text><text x="732.00" y="564.90" font-family="Liberation Sans" font-size="23" fill="#006464" text-anchor="end" font-weight="normal" stroke="#006464" stroke-width="0.2" textLength="161.2" lengthAdjust="spacingAndGlyphs">USB_SSRXP_DN2</text><path d="M787.8 551.1l13 13M787.8 564.1l13 -13" stroke="#000084" stroke-width="1.9"/><line x1="741.50" y1="584.40" x2="794.30" y2="584.40" stroke="#840000" stroke-width="1.9" stroke-linecap="butt"/><text x="768.90" y="582.00" font-family="Liberation Sans" font-size="23" fill="#a90000" text-anchor="middle" font-weight="normal" stroke="#a90000" stroke-width="0.2" textLength="23.1" lengthAdjust="spacingAndGlyphs">20</text><text x="732.00" y="591.70" font-family="Liberation Sans" font-size="23" fill="#006464" text-anchor="end" font-weight="normal" stroke="#006464" stroke-width="0.2" textLength="163.6" lengthAdjust="spacingAndGlyphs">USB_SSRXM_DN2</text><path d="M787.8 577.9l13 13M787.8 590.9l13 -13" stroke="#000084" stroke-width="1.9"/><line x1="741.50" y1="624.60" x2="794.30" y2="624.60" stroke="#840000" stroke-width="1.9" stroke-linecap="butt"/><text x="768.90" y="622.20" font-family="Liberation Sans" font-size="23" fill="#a90000" text-anchor="middle" font-weight="normal" stroke="#a90000" stroke-width="0.2" textLength="23.1" lengthAdjust="spacingAndGlyphs">14</text><text x="732.00" y="631.90" font-family="Liberation Sans" font-size="23" fill="#006464" text-anchor="end" font-weight="normal" stroke="#006464" stroke-width="0.2" textLength="123.5" lengthAdjust="spacingAndGlyphs">USB_DP_DN2</text><line x1="794.30" y1="624.60" x2="836.00" y2="624.60" stroke="#009600" stroke-width="2.2" stroke-linecap="butt"/><line x1="741.50" y1="651.40" x2="794.30" y2="651.40" stroke="#840000" stroke-width="1.9" stroke-linecap="butt"/><text x="768.90" y="649.00" font-family="Liberation Sans" font-size="23" fill="#a90000" text-anchor="middle" font-weight="normal" stroke="#a90000" stroke-width="0.2" textLength="23.1" lengthAdjust="spacingAndGlyphs">15</text><text x="732.00" y="658.70" font-family="Liberation Sans" font-size="23" fill="#006464" text-anchor="end" font-weight="normal" stroke="#006464" stroke-width="0.2" textLength="125.9" lengthAdjust="spacingAndGlyphs">USB_DM_DN2</text><line x1="794.30" y1="651.40" x2="836.00" y2="651.40" stroke="#009600" stroke-width="2.2" stroke-linecap="butt"/><line x1="741.50" y1="691.60" x2="794.30" y2="691.60" stroke="#840000" stroke-width="1.9" stroke-linecap="butt"/><text x="768.90" y="689.20" font-family="Liberation Sans" font-size="23" fill="#a90000" text-anchor="middle" font-weight="normal" stroke="#a90000" stroke-width="0.2" textLength="10.6" lengthAdjust="spacingAndGlyphs">6</text><text x="732.00" y="698.90" font-family="Liberation Sans" font-size="23" fill="#006464" text-anchor="end" font-weight="normal" stroke="#006464" stroke-width="0.2" textLength="176.2" lengthAdjust="spacingAndGlyphs">PWRCTL2/BATEN2</text><path d="M787.8 685.1l13 13M787.8 698.1l13 -13" stroke="#000084" stroke-width="1.9"/><line x1="741.50" y1="718.40" x2="794.30" y2="718.40" stroke="#840000" stroke-width="1.9" stroke-linecap="butt"/><text x="768.90" y="716.00" font-family="Liberation Sans" font-size="23" fill="#a90000" text-anchor="middle" font-weight="normal" stroke="#a90000" stroke-width="0.2" textLength="10.6" lengthAdjust="spacingAndGlyphs">8</text><text x="732.00" y="725.70" font-family="Liberation Sans" font-size="23" fill="#006464" text-anchor="end" font-weight="normal" stroke="#006464" stroke-width="0.2" textLength="110.9" lengthAdjust="spacingAndGlyphs">OVERCUR2Z</text><line x1="794.30" y1="718.40" x2="836.00" y2="718.40" stroke="#009600" stroke-width="2.2" stroke-linecap="butt"/><line x1="741.50" y1="745.20" x2="794.30" y2="745.20" stroke="#840000" stroke-width="1.9" stroke-linecap="butt"/><text x="768.90" y="742.80" font-family="Liberation Sans" font-size="23" fill="#a90000" text-anchor="middle" font-weight="normal" stroke="#a90000" stroke-width="0.2" textLength="23.1" lengthAdjust="spacingAndGlyphs">22</text><text x="732.00" y="752.50" font-family="Liberation Sans" font-size="23" fill="#006464" text-anchor="end" font-weight="normal" stroke="#006464" stroke-width="0.2" textLength="163.6" lengthAdjust="spacingAndGlyphs">SMBUSZ/SS_DN2</text><path d="M787.8 738.7l13 13M787.8 751.7l13 -13" stroke="#000084" stroke-width="1.9"/><line x1="741.50" y1="798.80" x2="794.30" y2="798.80" stroke="#840000" stroke-width="1.9" stroke-linecap="butt"/><text x="768.90" y="796.40" font-family="Liberation Sans" font-size="23" fill="#a90000" text-anchor="middle" font-weight="normal" stroke="#a90000" stroke-width="0.2" textLength="23.1" lengthAdjust="spacingAndGlyphs">36</text><text x="732.00" y="806.10" font-family="Liberation Sans" font-size="23" fill="#006464" text-anchor="end" font-weight="normal" stroke="#006464" stroke-width="0.2" textLength="309.0" lengthAdjust="spacingAndGlyphs">FULLPWRMGMTZ/SMBA1/SS_UP</text><line x1="794.30" y1="798.80" x2="836.00" y2="798.80" stroke="#009600" stroke-width="2.2" stroke-linecap="butt"/><line x1="0.00" y1="155.60" x2="233.00" y2="155.60" stroke="#009600" stroke-width="2.2" stroke-linecap="butt"/><line x1="178.00" y1="209.20" x2="233.00" y2="209.20" stroke="#009600" stroke-width="2.2" stroke-linecap="butt"/><line x1="178.00" y1="236.00" x2="233.00" y2="236.00" stroke="#009600" stroke-width="2.2" stroke-linecap="butt"/><line x1="178.00" y1="276.20" x2="233.00" y2="276.20" stroke="#009600" stroke-width="2.2" stroke-linecap="butt"/><line x1="178.00" y1="303.00" x2="233.00" y2="303.00" stroke="#009600" stroke-width="2.2" stroke-linecap="butt"/><line x1="178.00" y1="343.20" x2="233.00" y2="343.20" stroke="#009600" stroke-width="2.2" stroke-linecap="butt"/><line x1="178.00" y1="370.00" x2="233.00" y2="370.00" stroke="#009600" stroke-width="2.2" stroke-linecap="butt"/><path d="M178 195.8L99 195.8L88 209.2L99 222.6L178 222.6Z" fill="none" stroke="#840000" stroke-width="1.9" stroke-linejoin="miter"/><text x="108.00" y="216.70" font-family="Liberation Sans" font-size="23.5" fill="#840000" text-anchor="start" font-weight="normal" stroke="#840000" stroke-width="0.2" textLength="62.5" lengthAdjust="spacingAndGlyphs">SSTX+</text><path d="M178 222.6L99 222.6L88 236.0L99 249.4L178 249.4Z" fill="none" stroke="#840000" stroke-width="1.9" stroke-linejoin="miter"/><text x="108.00" y="243.50" font-family="Liberation Sans" font-size="23.5" fill="#840000" text-anchor="start" font-weight="normal" stroke="#840000" stroke-width="0.2" textLength="62.5" lengthAdjust="spacingAndGlyphs">SSTX–</text><path d="M83.6 262.8L167 262.8L178 276.2L167 289.6L83.6 289.6Z" fill="none" stroke="#840000" stroke-width="1.9" stroke-linejoin="miter"/><text x="95.60" y="283.70" font-family="Liberation Sans" font-size="23.5" fill="#840000" text-anchor="start" font-weight="normal" stroke="#840000" stroke-width="0.2" textLength="64.8" lengthAdjust="spacingAndGlyphs">SSRX+</text><path d="M83.6 289.6L167 289.6L178 303.0L167 316.4L83.6 316.4Z" fill="none" stroke="#840000" stroke-width="1.9" stroke-linejoin="miter"/><text x="95.60" y="310.50" font-family="Liberation Sans" font-size="23.5" fill="#840000" text-anchor="start" font-weight="normal" stroke="#840000" stroke-width="0.2" textLength="64.8" lengthAdjust="spacingAndGlyphs">SSRX–</text><path d="M61 343.2L71 329.8L167 329.8L178 343.2L167 356.6L71 356.6Z" fill="none" stroke="#840000" stroke-width="1.9" stroke-linejoin="miter"/><text x="83.60" y="350.70" font-family="Liberation Sans" font-size="23.5" fill="#840000" text-anchor="start" font-weight="normal" stroke="#840000" stroke-width="0.2" textLength="76.8" lengthAdjust="spacingAndGlyphs">USB_D+</text><path d="M61 370.0L71 356.6L167 356.6L178 370.0L167 383.4L71 383.4Z" fill="none" stroke="#840000" stroke-width="1.9" stroke-linejoin="miter"/><text x="83.60" y="377.50" font-family="Liberation Sans" font-size="23.5" fill="#840000" text-anchor="start" font-weight="normal" stroke="#840000" stroke-width="0.2" textLength="76.8" lengthAdjust="spacingAndGlyphs">USB_D–</text><line x1="124.00" y1="463.80" x2="246.00" y2="463.80" stroke="#009600" stroke-width="2.2" stroke-linecap="butt"/><text x="126.60" y="459.30" font-family="Liberation Sans" font-size="23.5" fill="#000000" text-anchor="start" font-weight="normal" stroke="#000000" stroke-width="0.2" textLength="109.0" lengthAdjust="spacingAndGlyphs">LED_HS_UP</text><line x1="0.00" y1="517.40" x2="246.00" y2="517.40" stroke="#009600" stroke-width="2.2" stroke-linecap="butt"/><text x="153.40" y="512.90" font-family="Liberation Sans" font-size="23.5" fill="#000000" text-anchor="start" font-weight="normal" stroke="#000000" stroke-width="0.2" textLength="17.8" lengthAdjust="spacingAndGlyphs">XI</text><line x1="0.00" y1="544.20" x2="246.00" y2="544.20" stroke="#009600" stroke-width="2.2" stroke-linecap="butt"/><text x="153.40" y="539.70" font-family="Liberation Sans" font-size="23.5" fill="#000000" text-anchor="start" font-weight="normal" stroke="#000000" stroke-width="0.2" textLength="25.0" lengthAdjust="spacingAndGlyphs">XO</text><line x1="31.00" y1="611.20" x2="246.00" y2="611.20" stroke="#009600" stroke-width="2.2" stroke-linecap="butt"/><line x1="31.00" y1="610.10" x2="31.00" y2="827.00" stroke="#009600" stroke-width="2.2" stroke-linecap="butt"/><text x="154.60" y="606.70" font-family="Liberation Sans" font-size="23.5" fill="#000000" text-anchor="start" font-weight="normal" stroke="#000000" stroke-width="0.2" textLength="84.0" lengthAdjust="spacingAndGlyphs">USB_RST</text><path d="M238.9 658.3l13 13M238.9 671.3l13 -13" stroke="#000084" stroke-width="1.9"/><path d="M238.9 685.1l13 13M238.9 698.1l13 -13" stroke="#000084" stroke-width="1.9"/><line x1="124.75" y1="758.60" x2="246.00" y2="758.60" stroke="#009600" stroke-width="2.2" stroke-linecap="butt"/><line x1="124.75" y1="757.50" x2="124.75" y2="827.50" stroke="#009600" stroke-width="2.2" stroke-linecap="butt"/><text x="206.50" y="757.20" font-family="Liberation Sans" font-size="8.8" fill="#000000" text-anchor="start" font-weight="normal" stroke="#000000" stroke-width="0.1" textLength="37.0" lengthAdjust="spacingAndGlyphs">USB_TEST</text><line x1="205.00" y1="798.80" x2="233.00" y2="798.80" stroke="#009600" stroke-width="2.2" stroke-linecap="butt"/><line x1="205.00" y1="797.70" x2="205.00" y2="827.50" stroke="#009600" stroke-width="2.2" stroke-linecap="butt"/><text x="206.50" y="797.20" font-family="Liberation Sans" font-size="8.8" fill="#000000" text-anchor="start" font-weight="normal" stroke="#000000" stroke-width="0.1" textLength="25.0" lengthAdjust="spacingAndGlyphs">R_USB</text><line x1="31.00" y1="827.00" x2="31.00" y2="857.50" stroke="#840000" stroke-width="1.9" stroke-linecap="butt"/><line x1="31.00" y1="873.20" x2="31.00" y2="905.00" stroke="#840000" stroke-width="1.9" stroke-linecap="butt"/><line x1="31.00" y1="905.00" x2="31.00" y2="920.00" stroke="#009600" stroke-width="2.2" stroke-linecap="butt"/><path d="M10.5 857.5H52M10.5 873.2H52" stroke="#840000" stroke-width="4.2" stroke-linecap="round"/><line x1="59.50" y1="838.00" x2="59.50" y2="918.00" stroke="#7a7a7a" stroke-width="1" stroke-linecap="butt"/><line x1="18.75" y1="877.50" x2="98.75" y2="877.50" stroke="#7a7a7a" stroke-width="1" stroke-linecap="butt"/><text x="60.50" y="860.00" font-family="Liberation Sans" font-size="23.5" fill="#006464" text-anchor="start" font-weight="normal" stroke="#006464" stroke-width="0.2" textLength="36.0" lengthAdjust="spacingAndGlyphs">C16</text><text x="62.50" y="885.50" font-family="Liberation Sans" font-size="23.5" fill="#006464" text-anchor="start" font-weight="normal" stroke="#006464" stroke-width="0.2" textLength="22.5" lengthAdjust="spacingAndGlyphs">1u</text><line x1="124.75" y1="827.50" x2="124.75" y2="838.00" stroke="#840000" stroke-width="1.9" stroke-linecap="butt"/><rect x="114.15" y="838" width="21.2" height="54.5" fill="none" stroke="#840000" stroke-width="2.6"/><line x1="124.75" y1="892.50" x2="124.75" y2="905.00" stroke="#840000" stroke-width="1.9" stroke-linecap="butt"/><line x1="124.75" y1="905.00" x2="124.75" y2="920.00" stroke="#009600" stroke-width="2.2" stroke-linecap="butt"/><line x1="205.00" y1="827.50" x2="205.00" y2="838.00" stroke="#840000" stroke-width="1.9" stroke-linecap="butt"/><rect x="194.40" y="838" width="21.2" height="54.5" fill="none" stroke="#840000" stroke-width="2.6"/><line x1="205.00" y1="892.50" x2="205.00" y2="905.00" stroke="#840000" stroke-width="1.9" stroke-linecap="butt"/><line x1="205.00" y1="905.00" x2="205.00" y2="920.00" stroke="#009600" stroke-width="2.2" stroke-linecap="butt"/><text x="146.00" y="859.50" font-family="Liberation Sans" font-size="23.5" fill="#006464" text-anchor="start" font-weight="normal" stroke="#006464" stroke-width="0.2" textLength="35.0" lengthAdjust="spacingAndGlyphs">R11</text><text x="144.00" y="885.50" font-family="Liberation Sans" font-size="23.5" fill="#006464" text-anchor="start" font-weight="normal" stroke="#006464" stroke-width="0.2" textLength="36.0" lengthAdjust="spacingAndGlyphs">4k7</text><text x="234.00" y="859.50" font-family="Liberation Sans" font-size="23.5" fill="#006464" text-anchor="start" font-weight="normal" stroke="#006464" stroke-width="0.2" textLength="37.0" lengthAdjust="spacingAndGlyphs">R13</text><text x="234.00" y="885.50" font-family="Liberation Sans" font-size="23.5" fill="#006464" text-anchor="start" font-weight="normal" stroke="#006464" stroke-width="0.2" textLength="47.0" lengthAdjust="spacingAndGlyphs">9k53</text><line x1="31.00" y1="920.00" x2="31.00" y2="933.00" stroke="#840000" stroke-width="1.9" stroke-linecap="butt"/><path d="M17.50 933.00H44.50L31.00 946.00Z" fill="none" stroke="#840000" stroke-width="1.9" stroke-linejoin="miter"/><text x="31.00" y="969.00" font-family="Liberation Sans" font-size="23.5" fill="#006464" text-anchor="middle" font-weight="normal" stroke="#006464" stroke-width="0.2" textLength="38.5" lengthAdjust="spacingAndGlyphs">GND</text><line x1="124.75" y1="920.00" x2="124.75" y2="933.00" stroke="#840000" stroke-width="1.9" stroke-linecap="butt"/><path d="M111.25 933.00H138.25L124.75 946.00Z" fill="none" stroke="#840000" stroke-width="1.9" stroke-linejoin="miter"/><text x="124.75" y="969.00" font-family="Liberation Sans" font-size="23.5" fill="#006464" text-anchor="middle" font-weight="normal" stroke="#006464" stroke-width="0.2" textLength="38.5" lengthAdjust="spacingAndGlyphs">GND</text><line x1="205.00" y1="920.00" x2="205.00" y2="933.00" stroke="#840000" stroke-width="1.9" stroke-linecap="butt"/><path d="M191.50 933.00H218.50L205.00 946.00Z" fill="none" stroke="#840000" stroke-width="1.9" stroke-linejoin="miter"/><text x="205.00" y="969.00" font-family="Liberation Sans" font-size="23.5" fill="#006464" text-anchor="middle" font-weight="normal" stroke="#006464" stroke-width="0.2" textLength="38.5" lengthAdjust="spacingAndGlyphs">GND</text><line x1="513.00" y1="851.40" x2="513.00" y2="918.70" stroke="#840000" stroke-width="1.9" stroke-linecap="butt"/><path d="M499.20 918.70H526.80L513.00 932.70Z" fill="none" stroke="#840000" stroke-width="1.9" stroke-linejoin="miter"/><text x="513.00" y="956.00" font-family="Liberation Sans" font-size="23.5" fill="#006464" text-anchor="middle" font-weight="normal" stroke="#006464" stroke-width="0.2" textLength="38.5" lengthAdjust="spacingAndGlyphs">GND</text><text x="510.50" y="891.00" font-family="Liberation Sans" font-size="23" fill="#a90000" text-anchor="start" font-weight="normal" stroke="#a90000" stroke-width="0.2" textLength="24.0" lengthAdjust="spacingAndGlyphs" transform="rotate(-90 510.50 891.00)">49</text><text x="519.50" y="842.00" font-family="Liberation Sans" font-size="23" fill="#006464" text-anchor="start" font-weight="normal" stroke="#006464" stroke-width="0.2" textLength="22.0" lengthAdjust="spacingAndGlyphs" transform="rotate(-90 519.50 842.00)">EP</text><text x="547.70" y="876.00" font-family="Liberation Sans" font-size="23.5" fill="#006464" text-anchor="start" font-weight="normal" stroke="#006464" stroke-width="0.2" textLength="200.0" lengthAdjust="spacingAndGlyphs">TUSB8020BIPHPRQ1</text><rect x="-20" y="73" width="22.5" height="56.6" fill="none" stroke="#840000" stroke-width="2.6"/><rect x="-20" y="180.8" width="22.5" height="56" fill="none" stroke="#840000" stroke-width="2.6"/><text x="12.20" y="96.00" font-family="Liberation Sans" font-size="23.5" fill="#006464" text-anchor="start" font-weight="normal" stroke="#006464" stroke-width="0.2" textLength="23.0" lengthAdjust="spacingAndGlyphs">R9</text><text x="9.50" y="123.20" font-family="Liberation Sans" font-size="23.5" fill="#006464" text-anchor="start" font-weight="normal" stroke="#006464" stroke-width="0.2" textLength="47.0" lengthAdjust="spacingAndGlyphs">90k9</text><text x="12.20" y="203.00" font-family="Liberation Sans" font-size="23.5" fill="#006464" text-anchor="start" font-weight="normal" stroke="#006464" stroke-width="0.2" textLength="36.0" lengthAdjust="spacingAndGlyphs">R10</text><text x="9.50" y="230.40" font-family="Liberation Sans" font-size="23.5" fill="#006464" text-anchor="start" font-weight="normal" stroke="#006464" stroke-width="0.2" textLength="35.0" lengthAdjust="spacingAndGlyphs">10k</text><text x="-2.00" y="12.00" font-family="Liberation Sans" font-size="23.5" fill="#006464" text-anchor="start" font-weight="normal" stroke="#006464" stroke-width="0.2" textLength="12.0" lengthAdjust="spacingAndGlyphs">V</text><text x="-2.00" y="312.00" font-family="Liberation Sans" font-size="23.5" fill="#006464" text-anchor="start" font-weight="normal" stroke="#006464" stroke-width="0.2" textLength="12.0" lengthAdjust="spacingAndGlyphs">D</text><path d="M-10 275H4L-3 282Z" fill="none" stroke="#840000" stroke-width="1.9"/><line x1="246" y1="610.6" x2="299.9" y2="610.6" stroke="#a8e2f6" stroke-width="4.5"/><line x1="246" y1="610.6" x2="299.9" y2="610.6" stroke="#840000" stroke-width="1.9"/><rect x="285" y="603" width="3" height="15" fill="#840000"/><text x="273" y="608.80" font-family="Liberation Sans" font-size="23" fill="#a90000" text-anchor="middle" textLength="23.1" lengthAdjust="spacingAndGlyphs" stroke="#a8e2f6" stroke-width="3.2" stroke-linejoin="round" paint-order="stroke">11</text><text x="309.4" y="618.50" font-family="Liberation Sans" font-size="23" fill="#006464" text-anchor="start" textLength="60.8" lengthAdjust="spacingAndGlyphs" stroke="#a8e2f6" stroke-width="3.2" stroke-linejoin="round" paint-order="stroke">GRSTZ</text><text x="795.70" y="180.60" font-family="Liberation Sans" font-size="10" fill="#000000" text-anchor="start" font-weight="normal" stroke="#000000" stroke-width="0.1" textLength="41.0" lengthAdjust="spacingAndGlyphs">USB1_CAP</text><text x="795.70" y="207.40" font-family="Liberation Sans" font-size="10" fill="#000000" text-anchor="start" font-weight="normal" stroke="#000000" stroke-width="0.1" textLength="41.0" lengthAdjust="spacingAndGlyphs">USB1_CAP</text><text x="823.00" y="390.90" font-family="Liberation Sans" font-size="23.5" fill="#006464" text-anchor="start" font-weight="normal" stroke="#006464" stroke-width="0.2" textLength="12.0" lengthAdjust="spacingAndGlyphs">R</text><text x="823.00" y="699.10" font-family="Liberation Sans" font-size="23.5" fill="#006464" text-anchor="start" font-weight="normal" stroke="#006464" stroke-width="0.2" textLength="12.0" lengthAdjust="spacingAndGlyphs">R</text><line x1="829.00" y1="410.20" x2="836.00" y2="410.20" stroke="#840000" stroke-width="1.9" stroke-linecap="butt"/><line x1="829.00" y1="718.40" x2="836.00" y2="718.40" stroke="#840000" stroke-width="1.9" stroke-linecap="butt"/><text x="818.00" y="794.30" font-family="Liberation Sans" font-size="23.5" fill="#000000" text-anchor="start" font-weight="normal" stroke="#000000" stroke-width="0.2" textLength="22.0" lengthAdjust="spacingAndGlyphs">LE</text><defs><linearGradient id="tbg" x1="0" x2="1" y1="0" y2="0"><stop offset="0" stop-color="#ececec"/><stop offset="0.78" stop-color="#efefef"/><stop offset="1" stop-color="#d6d6d6"/></linearGradient></defs><rect x="836" y="0" width="36" height="1000" fill="url(#tbg)"/><rect x="836" y="0" width="1.2" height="1000" fill="#a3a3a3"/><rect x="871" y="0" width="2" height="1000" fill="#8c8c8c"/><rect x="871" y="0" width="2" height="211" fill="#222222"/><rect x="873" y="0" width="35" height="1000" fill="#f0f0f0"/><rect x="907.3" y="0" width="1" height="1000" fill="#a0a0a0"/><path d="M846 -3 L862.4 9 L846 20.4 Z" fill="none" stroke="#555555" stroke-width="2" stroke-linecap="butt" stroke-linejoin="miter"/><path d="M842 2.8H846 M842 14.7H846 M862.4 9H866" fill="none" stroke="#555555" stroke-width="2" stroke-linecap="butt" stroke-linejoin="miter"/><path d="M848.5 5.5H852.5 M848.5 11.5H852.5 M850.5 9.5V13.5" fill="none" stroke="#555555" stroke-width="1.4" stroke-linecap="butt" stroke-linejoin="miter"/><path d="M854 30V43 M844 43H864 M847.5 47H861 M851 51H857.5" fill="none" stroke="#555555" stroke-width="2" stroke-linecap="butt" stroke-linejoin="miter"/><path d="M844.5 82L863.5 63.5" fill="none" stroke="#2a85d0" stroke-width="1.6" stroke-linecap="butt" stroke-linejoin="miter"/><path d="M845.5 113L862.5 97" fill="none" stroke="#2a85d0" stroke-width="3.4" stroke-linecap="round" stroke-linejoin="miter"/><path d="M843 127.8H853 M843 136.3H853 M862.5 125V148" fill="none" stroke="#555555" stroke-width="2" stroke-linecap="butt" stroke-linejoin="miter"/><path d="M852.5 127.8L862 137 M852.5 136.3L862 145.5" fill="none" stroke="#2a85d0" stroke-width="1.6" stroke-linecap="butt" stroke-linejoin="miter"/><path d="M842 169H853" fill="none" stroke="#555555" stroke-width="1.8" stroke-linecap="butt" stroke-linejoin="miter"/><path d="M848 163L860 175M848 175L860 163" fill="none" stroke="#2a85d0" stroke-width="1.8" stroke-linecap="butt" stroke-linejoin="miter"/><path d="M842 200.8H854 M854 189V213" fill="none" stroke="#555555" stroke-width="1.8" stroke-linecap="butt" stroke-linejoin="miter"/><circle cx="854" cy="200.8" r="4.3" fill="#2a85d0"/><text x="854" y="237" font-family="Liberation Sans" font-size="15" fill="#555555" text-anchor="middle" font-style="normal" font-weight="normal">A</text><path d="M843 238.8H865" fill="none" stroke="#555555" stroke-width="1.8" stroke-linecap="butt" stroke-linejoin="miter"/><circle cx="849" cy="262.4" r="3.2" fill="none" stroke="#555555" stroke-width="1.6"/><path d="M849 265.6V271" fill="none" stroke="#555555" stroke-width="2" stroke-linecap="butt" stroke-linejoin="miter"/><text x="858" y="270.5" font-family="Liberation Sans" font-size="14" fill="#555555" text-anchor="middle" font-style="italic" font-weight="normal">A</text><defs><pattern id="hat" patternUnits="userSpaceOnUse" width="4" height="4" patternTransform="rotate(45)"><rect width="2" height="4" fill="#555555"/></pattern></defs><path d="M851 287.5H863.5V305.5H844.5V296H851Z" fill="url(#hat)" stroke="#555555" stroke-width="1.6"/><path d="M842.5 320.5H857L862 329L857 337.5H842.5Z" fill="none" stroke="#555555" stroke-width="1.8" stroke-linecap="butt" stroke-linejoin="miter"/><path d="M862 329H866" fill="none" stroke="#2a85d0" stroke-width="1.6" stroke-linecap="butt" stroke-linejoin="miter"/><text x="850.5" y="334.5" font-family="Liberation Sans" font-size="12.5" fill="#555555" text-anchor="middle" font-style="normal" font-weight="normal">A</text><text x="848" y="367" font-family="Liberation Sans" font-size="15" fill="#555555" text-anchor="middle" font-style="normal" font-weight="normal">A</text><path d="M857.5 354.5L862 360L857.5 365.5L853 360Z" fill="none" stroke="#555555" stroke-width="1.6" stroke-linecap="butt" stroke-linejoin="miter"/><path d="M862 360H866" fill="none" stroke="#555555" stroke-width="1.6" stroke-linecap="butt" stroke-linejoin="miter"/><rect x="842.5" y="381" width="21" height="21" rx="3.5" fill="#d4c9ae" stroke="#555555" stroke-width="1"/><path d="M846.5 385V398 M846.5 391.5L855 386.5 M846.5 391.5L855 396.5 M855 386.5H862" fill="none" stroke="#555555" stroke-width="1.2" stroke-linecap="butt" stroke-linejoin="miter"/><circle cx="859.2" cy="398" r="7" fill="#cc2342" stroke="#f0f0f0" stroke-width="1"/><path d="M855.2 398H863.2M859.2 394V402" fill="none" stroke="#ffffff" stroke-width="2" stroke-linecap="butt" stroke-linejoin="miter"/><path d="M842.5 417H857L862 425.5L857 434H842.5Z" fill="none" stroke="#2a85d0" stroke-width="1.8" stroke-linecap="butt" stroke-linejoin="miter"/><path d="M862 425.5H866" fill="none" stroke="#2a85d0" stroke-width="1.6" stroke-linecap="butt" stroke-linejoin="miter"/><text x="850.5" y="431" font-family="Liberation Sans" font-size="12.5" fill="#555555" text-anchor="middle" font-style="normal" font-weight="normal">A</text><rect x="842.5" y="445" width="19" height="18" fill="#d4c9ae" stroke="#555555" stroke-width="1"/><text x="848" y="454.5" font-family="Liberation Sans" font-size="10" fill="#555555" text-anchor="middle" font-style="normal" font-weight="normal">A</text><path d="M856.5 449L859.5 452L856.5 455L853.5 452Z" fill="none" stroke="#555555" stroke-width="1" stroke-linecap="butt" stroke-linejoin="miter"/><circle cx="859" cy="462" r="7" fill="#cc2342" stroke="#f0f0f0" stroke-width="1"/><path d="M859 458V465.5 M855.8 462.5L859 465.8L862.2 462.5" fill="none" stroke="#ffffff" stroke-width="1.8" stroke-linecap="butt" stroke-linejoin="miter"/><path d="M841 476.5H867" fill="none" stroke="#9a9a9a" stroke-width="1" stroke-linecap="butt" stroke-linejoin="miter"/><path d="M846 489.5H862 M854 489.5V507" fill="none" stroke="#555555" stroke-width="3.6" stroke-linecap="butt" stroke-linejoin="miter"/><rect x="844.5" y="521" width="19" height="16" fill="#c8c8c8" stroke="#555555" stroke-width="2"/><path d="M848 525.5H859 M848 529H859 M848 532.5H855" fill="none" stroke="#555555" stroke-width="1" stroke-linecap="butt" stroke-linejoin="miter"/><rect x="842.5" y="550.5" width="23" height="22" fill="#ffffff" stroke="#555555" stroke-width="1.4"/><rect x="842.5" y="550.5" width="23" height="5.5" fill="#bdbdbd"/><path d="M842.5 556H865.5 M842.5 561.5H865.5 M842.5 567H865.5 M850.2 550.5V572.5 M857.8 550.5V572.5" fill="none" stroke="#555555" stroke-width="1.2" stroke-linecap="butt" stroke-linejoin="miter"/><rect x="844.5" y="584.5" width="19" height="16.5" fill="#c4c4c4" stroke="#555555" stroke-width="2"/><circle cx="854" cy="625" r="9.3" fill="#c4c4c4" stroke="#555555" stroke-width="2"/><path d="M844.5 666 Q845.5 648 863.5 647" fill="none" stroke="#555555" stroke-width="2" stroke-linecap="butt" stroke-linejoin="miter"/><path d="M843 688.5H863" fill="none" stroke="#2a85d0" stroke-width="1.2" stroke-linecap="butt" stroke-linejoin="miter"/><rect x="842.3" y="686.8" width="3.4" height="3.4" fill="#2a85d0"/><rect x="861.8" y="686.8" width="3.4" height="3.4" fill="#2a85d0"/><circle cx="853.5" cy="688.5" r="1.8" fill="#ffffff" stroke="#2a85d0" stroke-width="1"/><path d="M861 679 Q865 686 855 690 Q846 694 848 698" fill="none" stroke="#555555" stroke-width="2" stroke-linecap="butt" stroke-linejoin="miter"/><path d="M844.5 730.5L863.5 711.5" fill="none" stroke="#555555" stroke-width="1.8" stroke-linecap="butt" stroke-linejoin="miter"/><rect x="843" y="742" width="22" height="22" rx="3.5" fill="#555555"/><path d="M845.5 760.5L851.5 751.5L854 754.5L857 751L863 760.5Z" fill="#ffffff"/><circle cx="857.5" cy="746.5" r="2.2" fill="#ffffff"/><path d="M846 775L846 791L850 787.5L853.5 794L856 793L852.5 786.5L858 786.5Z" fill="#555555"/><circle cx="859" cy="790.5" r="7" fill="#cc2342" stroke="#f0f0f0" stroke-width="1"/><path d="M856 787.5L862 793.5M862 787.5L856 793.5" fill="none" stroke="#ffffff" stroke-width="1.8" stroke-linecap="butt" stroke-linejoin="miter"/><circle cx="883" cy="1" r="1.2" fill="#555555"/><circle cx="889.5" cy="1" r="1.2" fill="#555555"/><circle cx="881.5" cy="6.5" r="1.2" fill="#555555"/><rect x="884.5" y="7.0" width="1.6" height="1.6" fill="#8a8a8a"/><rect x="884.5" y="10.0" width="1.6" height="1.6" fill="#8a8a8a"/><rect x="887.5" y="4.0" width="1.6" height="1.6" fill="#8a8a8a"/><rect x="887.5" y="7.0" width="1.6" height="1.6" fill="#8a8a8a"/><rect x="887.5" y="10.0" width="1.6" height="1.6" fill="#8a8a8a"/><rect x="890.5" y="1.0" width="1.6" height="1.6" fill="#8a8a8a"/><rect x="890.5" y="4.0" width="1.6" height="1.6" fill="#8a8a8a"/><rect x="890.5" y="7.0" width="1.6" height="1.6" fill="#8a8a8a"/><rect x="890.5" y="10.0" width="1.6" height="1.6" fill="#8a8a8a"/><rect x="893.5" y="1.0" width="1.6" height="1.6" fill="#8a8a8a"/><rect x="893.5" y="4.0" width="1.6" height="1.6" fill="#8a8a8a"/><rect x="893.5" y="7.0" width="1.6" height="1.6" fill="#8a8a8a"/><rect x="893.5" y="10.0" width="1.6" height="1.6" fill="#8a8a8a"/><path d="M878.5 14.5L893 0" fill="none" stroke="#555555" stroke-width="1.2" stroke-linecap="butt" stroke-linejoin="miter"/><path d="M879.5 44.5V25 M879.5 44.5H900" fill="none" stroke="#555555" stroke-width="1.6" stroke-linecap="butt" stroke-linejoin="miter"/><path d="M877.5 28L879.5 23.5L881.5 28Z" fill="#555555"/><path d="M896.5 42.5L901 44.5L896.5 46.5Z" fill="#555555"/><path d="M880 44.5L898 26" fill="none" stroke="#555555" stroke-width="1" stroke-linecap="butt" stroke-linejoin="miter"/><circle cx="899" cy="26" r="2.2" fill="#cc2342"/><text x="886.5" y="35" font-family="Liberation Sans" font-size="12" fill="#555555" text-anchor="middle" font-style="normal" font-weight="normal">r</text><text x="895" y="42" font-family="Liberation Sans" font-size="10" fill="#555555" text-anchor="middle" font-style="italic" font-weight="normal">θ</text><text x="890.3" y="66.5" font-family="Liberation Sans" font-size="12.5" fill="#555555" text-anchor="middle" font-style="normal" font-weight="normal">in</text><path d="M880.5 72H900" fill="none" stroke="#555555" stroke-width="1.4" stroke-linecap="butt" stroke-linejoin="miter"/><path d="M879 72L883.5 69.5V74.5Z" fill="#555555"/><path d="M901.5 72L897 69.5V74.5Z" fill="#555555"/><text x="890.3" y="99" font-family="Liberation Sans" font-size="12.5" fill="#555555" text-anchor="middle" font-style="normal" font-weight="normal">mil</text><path d="M880.5 104H900" fill="none" stroke="#555555" stroke-width="1.4" stroke-linecap="butt" stroke-linejoin="miter"/><path d="M879 104L883.5 101.5V106.5Z" fill="#555555"/><path d="M901.5 104L897 101.5V106.5Z" fill="#555555"/><rect x="875.5" y="116.3" width="29.5" height="29.5" fill="#bcdcf5" stroke="#2a85d0" stroke-width="1"/><text x="890.3" y="131.5" font-family="Liberation Sans" font-size="12.5" fill="#555555" text-anchor="middle" font-style="normal" font-weight="normal">mm</text><path d="M880.5 136H900" fill="none" stroke="#555555" stroke-width="1.4" stroke-linecap="butt" stroke-linejoin="miter"/><path d="M879 136L883.5 133.5V138.5Z" fill="#555555"/><path d="M901.5 136L897 133.5V138.5Z" fill="#555555"/><path d="M877 163H902 M890 151V175" fill="none" stroke="#9a9a9a" stroke-width="0.8" stroke-linecap="butt" stroke-linejoin="miter"/><path d="M885 163H894.5 M890 158V168" fill="none" stroke="#2a85d0" stroke-width="2.6" stroke-linecap="round" stroke-linejoin="miter"/><path d="M890.5 164L890.5 175.5L893.5 172.5L896 177L898 176L895.5 171.5L899 171Z" fill="#555555"/><path d="M877 182.3H903" fill="none" stroke="#9a9a9a" stroke-width="1" stroke-linecap="butt" stroke-linejoin="miter"/><path d="M881 191.5V214 M879 210.5H901 M881 210.5L897 195.5" fill="none" stroke="#555555" stroke-width="1.8" stroke-linecap="butt" stroke-linejoin="miter"/><path d="M881 204H885.5V210.5" fill="none" stroke="#555555" stroke-width="1" stroke-linecap="butt" stroke-linejoin="miter"/><path d="M877 222.3H903" fill="none" stroke="#9a9a9a" stroke-width="1" stroke-linecap="butt" stroke-linejoin="miter"/><path d="M882.5 236.5L899.5 240 M882.5 236.5L896.5 248.5 M883.5 250.5L895 239" fill="none" stroke="#555555" stroke-width="1" stroke-linecap="butt" stroke-linejoin="miter"/><circle cx="882.5" cy="236.5" r="2.3" fill="#ffffff" stroke="#555555" stroke-width="1"/><circle cx="895" cy="239" r="2.3" fill="#ffffff" stroke="#555555" stroke-width="1"/><circle cx="883.5" cy="250.5" r="2.3" fill="#ffffff" stroke="#555555" stroke-width="1"/><circle cx="896.5" cy="248.5" r="2.3" fill="#ffffff" stroke="#555555" stroke-width="1"/><path d="M878.5 288L902 264 M881 276.5L891 266 M888 284 Q898 281 899 273" fill="none" stroke="#555555" stroke-width="1" stroke-linecap="butt" stroke-linejoin="miter"/><circle cx="881" cy="276.5" r="2.3" fill="#ffffff" stroke="#555555" stroke-width="1"/><circle cx="891" cy="266" r="2.3" fill="#ffffff" stroke="#555555" stroke-width="1"/><circle cx="888" cy="284" r="2.3" fill="#ffffff" stroke="#555555" stroke-width="1"/><circle cx="899" cy="273" r="2.3" fill="#ffffff" stroke="#555555" stroke-width="1"/><path d="M877 294.4H903" fill="none" stroke="#9a9a9a" stroke-width="1" stroke-linecap="butt" stroke-linejoin="miter"/><path d="M878 305L884 311.5H892L902 321.5 M878 316.5L884 322H892L898 328" fill="none" stroke="#555555" stroke-width="1.6" stroke-linecap="butt" stroke-linejoin="miter"/><path d="M884 303.5H890L902 315" fill="none" stroke="#cc2342" stroke-width="1.6" stroke-linecap="butt" stroke-linejoin="miter"/><circle cx="888" cy="314.5" r="3" fill="#ffffff" stroke="#f29100" stroke-width="2"/><path d="M878 338.5H890L897 345.5V359 M892 335.5L898 341.5V359" fill="none" stroke="#bdbdbd" stroke-width="1.6" stroke-linecap="butt" stroke-linejoin="miter"/><path d="M888 346.5H902" fill="none" stroke="#a8cce8" stroke-width="2.2" stroke-linecap="butt" stroke-linejoin="miter"/><path d="M884.5 349.5V359" fill="none" stroke="#e8a8b0" stroke-width="2.2" stroke-linecap="butt" stroke-linejoin="miter"/><circle cx="884.5" cy="346.5" r="3" fill="#ffffff" stroke="#f5c080" stroke-width="2"/><path d="M877 366.6H903" fill="none" stroke="#9a9a9a" stroke-width="1" stroke-linecap="butt" stroke-linejoin="miter"/><rect x="875.5" y="372.3" width="29.5" height="29.5" fill="#bcdcf5" stroke="#2a85d0" stroke-width="1"/><path d="M880.3 382.5H887V377.5H899.5V396.5H880.3Z" fill="#36a9e9" stroke="#1d6fb0" stroke-width="1"/><circle cx="895" cy="386.5" r="3.6" fill="#c0d9f0"/><path d="M894.5 386.5H900" fill="none" stroke="#555555" stroke-width="1.6" stroke-linecap="butt" stroke-linejoin="miter"/><circle cx="894.5" cy="386.5" r="1.6" fill="#555555"/><path d="M880.5 414H886.5V409H899.5V426.5H880.5Z" fill="none" stroke="#2a85d0" stroke-width="1.3" stroke-dasharray="2.2 1.6"/><path d="M894.5 418H900" fill="none" stroke="#555555" stroke-width="1.6" stroke-linecap="butt" stroke-linejoin="miter"/><circle cx="894.5" cy="418" r="1.6" fill="#555555"/><path d="M877 438.4H903" fill="none" stroke="#9a9a9a" stroke-width="1" stroke-linecap="butt" stroke-linejoin="miter"/><path d="M878.5 447.5H901.5V467.5H878.5V460A2.5 2.5 0 0 0 878.5 455Z" fill="none" stroke="#555555" stroke-width="1.3"/><rect x="881.0" y="447" width="4.2" height="4.2" fill="#2a85d0"/><rect x="881.0" y="464.5" width="4.2" height="4.5" fill="#ffffff" stroke="#2a85d0" stroke-width="1"/><rect x="887.2" y="447" width="4.2" height="4.2" fill="#2a85d0"/><rect x="887.2" y="464.5" width="4.2" height="4.5" fill="#ffffff" stroke="#2a85d0" stroke-width="1"/><rect x="893.4" y="447" width="4.2" height="4.2" fill="#2a85d0"/><rect x="893.4" y="464.5" width="4.2" height="4.5" fill="#ffffff" stroke="#2a85d0" stroke-width="1"/><path d="M878.5 470.5L902 447" fill="none" stroke="#555555" stroke-width="1" stroke-linecap="butt" stroke-linejoin="miter"/><circle cx="890" cy="490" r="7.5" fill="none" stroke="#f39c12" stroke-width="4.5"/><circle cx="891" cy="491" r="9" fill="none" stroke="#bbbbbb" stroke-width="1"/><path d="M878.5 502.5L902 479" fill="none" stroke="#555555" stroke-width="1" stroke-linecap="butt" stroke-linejoin="miter"/><path d="M890 511V534" fill="none" stroke="#cc2342" stroke-width="3.6" stroke-linecap="round" stroke-linejoin="miter"/><path d="M889.5 524H901" fill="none" stroke="#2a85d0" stroke-width="1.2" stroke-linecap="butt" stroke-linejoin="miter"/><path d="M879 522.5H890" fill="none" stroke="#2a85d0" stroke-width="3" stroke-linecap="round" stroke-linejoin="miter"/><path d="M890.3 524V534M888 525V534" fill="none" stroke="#cc2342" stroke-width="1" stroke-linecap="butt" stroke-linejoin="miter"/><path d="M878.5 534.5L902 511" fill="none" stroke="#555555" stroke-width="1" stroke-linecap="butt" stroke-linejoin="miter"/><path d="M877 542.7H903" fill="none" stroke="#9a9a9a" stroke-width="1" stroke-linecap="butt" stroke-linejoin="miter"/><rect x="875.5" y="548.3" width="29.5" height="29.5" fill="#bcdcf5" stroke="#2a85d0" stroke-width="1"/><path d="M881.2 564.5L890.3 556L899.5 564.5L890.3 573.5Z" fill="#f39c12"/><path d="M881.2 561.5L890.3 553L899.5 561.5L890.3 570Z" fill="#555555"/><path d="M881.2 558L890.3 552.3L899.5 558L890.3 566.5Z" fill="#1f7ec8"/><path d="M881.5 558.5L890.3 550.5L899 558.5L890.3 566.5Z" fill="#2080cc"/><path d="M882.3 585.2 A3.2 3.2 0 1 1 880.4 587.1" fill="none" stroke="#2a85d0" stroke-width="3.4"/><path d="M885.8 590.6L897.6 602.4" fill="none" stroke="#2a85d0" stroke-width="3.6" stroke-linecap="round" stroke-linejoin="miter"/><circle cx="897.6" cy="602.6" r="0.9" fill="#ffffff"/><path d="M879.5 605.5L893.5 591.5" fill="none" stroke="#555555" stroke-width="1.3" stroke-linecap="butt" stroke-linejoin="miter"/><path d="M893 592L899.8 585.2" fill="none" stroke="#555555" stroke-width="4.4" stroke-linecap="round" stroke-linejoin="miter"/><svg x="908" y="0" width="808" height="1000" viewBox="908 0 808 1000" overflow="hidden"><rect x="908" y="0" width="808" height="1000" fill="#001023"/><defs><pattern id="pg" patternUnits="userSpaceOnUse" x="950.75" y="87.0" width="16.625" height="16.625"><rect x="0" y="0" width="1" height="1.3" fill="#6e6a5e"/></pattern><pattern id="pg2" patternUnits="userSpaceOnUse" x="950.05" y="86.3" width="166.25" height="166.25"><rect x="0" y="0" width="2.4" height="2.4" fill="#8c877a"/></pattern></defs><rect x="908" y="0" width="808" height="1000" fill="url(#pg)"/><rect x="908" y="0" width="808" height="1000" fill="url(#pg2)"/><rect x="926.00" y="-10.00" width="50.00" height="220.50" rx="0" fill="#c83434"/><rect x="1008.75" y="-10.00" width="50.00" height="220.50" rx="0" fill="#c83434"/><rect x="1092.00" y="-10.00" width="49.60" height="220.50" rx="0" fill="#c83434"/><rect x="1176.40" y="-10.00" width="48.30" height="220.50" rx="0" fill="#c83434"/><path d="M1215 106 L1224.7 97 L1255 72 L1279 72 L1279 22 L1240 22 Q1224.7 22 1224.7 37 L1215 37 Z" fill="#c83434"/><path d="M900.00 254.40 L1281.00 254.40 L1431.00 104.40 L1668.00 104.40" fill="none" stroke="#c83434" stroke-width="24.2" stroke-linecap="butt" stroke-linejoin="miter"/><rect x="1325.00" y="311.25" width="246.25" height="50.00" rx="0" fill="#c83434"/><rect x="1325.00" y="394.00" width="246.25" height="50.00" rx="0" fill="#c83434"/><rect x="1325.00" y="477.00" width="246.25" height="50.00" rx="0" fill="#c83434"/><rect x="1325.00" y="560.00" width="246.25" height="50.00" rx="0" fill="#c83434"/><rect x="1325.00" y="643.75" width="246.25" height="50.00" rx="0" fill="#c83434"/><rect x="1325.00" y="727.50" width="246.25" height="50.00" rx="0" fill="#c83434"/><rect x="1325.00" y="809.70" width="246.25" height="50.00" rx="0" fill="#c83434"/><rect x="1325.00" y="894.00" width="246.25" height="50.00" rx="0" fill="#c83434"/><rect x="1325.00" y="976.00" width="246.25" height="50.00" rx="0" fill="#c83434"/><path d="M1480.00 336.25 L1566.00 336.25 L1637.00 265.00" fill="none" stroke="#c83434" stroke-width="37" stroke-linecap="butt" stroke-linejoin="round"/><path d="M1560.00 418.30 L1628.00 418.30 L1660.00 386.30" fill="none" stroke="#c83434" stroke-width="32.6" stroke-linecap="butt" stroke-linejoin="round"/><path d="M1560.00 501.50 L1660.00 501.50" fill="none" stroke="#c83434" stroke-width="33.8" stroke-linecap="butt" stroke-linejoin="miter"/><path d="M1560.00 584.60 L1720.00 584.60" fill="none" stroke="#c83434" stroke-width="33.2" stroke-linecap="butt" stroke-linejoin="miter"/><path d="M1560.00 667.40 L1670.00 667.40" fill="none" stroke="#c83434" stroke-width="32.8" stroke-linecap="butt" stroke-linejoin="miter"/><path d="M1560.00 752.00 L1592.00 752.00 L1668.60 828.30" fill="none" stroke="#c83434" stroke-width="33" stroke-linecap="butt" stroke-linejoin="round"/><path d="M1560.00 917.60 L1632.00 917.60 L1673.50 959.00 L1673.50 1014.00" fill="none" stroke="#c83434" stroke-width="32.3" stroke-linecap="butt" stroke-linejoin="round"/><rect x="908.00" y="492.00" width="136.00" height="508.00" rx="0" fill="#c83434"/><path d="M1285.50 752.00 L1330.00 752.00" fill="none" stroke="#c83434" stroke-width="30" stroke-linecap="butt" stroke-linejoin="miter"/><text x="1029.00" y="87.50" font-family="Liberation Sans" font-size="22" fill="#f0c4c4" text-anchor="middle" font-weight="normal" stroke="#f0c4c4" stroke-width="0" textLength="20.0" lengthAdjust="spacingAndGlyphs" transform="rotate(-90 1029.00 87.50)">15</text><text x="1054.00" y="89.00" font-family="Liberation Sans" font-size="22" fill="#f0c4c4" text-anchor="middle" font-weight="normal" stroke="#f0c4c4" stroke-width="0" textLength="91.0" lengthAdjust="spacingAndGlyphs" transform="rotate(-90 1054.00 89.00)">USB2_D-</text><text x="1116.00" y="87.50" font-family="Liberation Sans" font-size="22" fill="#f0c4c4" text-anchor="middle" font-weight="normal" stroke="#f0c4c4" stroke-width="0" textLength="20.0" lengthAdjust="spacingAndGlyphs" transform="rotate(-90 1116.00 87.50)">14</text><text x="1134.00" y="89.00" font-family="Liberation Sans" font-size="22" fill="#f0c4c4" text-anchor="middle" font-weight="normal" stroke="#f0c4c4" stroke-width="0" textLength="91.0" lengthAdjust="spacingAndGlyphs" transform="rotate(-90 1134.00 89.00)">USB2_D+</text><text x="1195.50" y="87.50" font-family="Liberation Sans" font-size="22" fill="#f0c4c4" text-anchor="middle" font-weight="normal" stroke="#f0c4c4" stroke-width="0" textLength="20.0" lengthAdjust="spacingAndGlyphs" transform="rotate(-90 1195.50 87.50)">13</text><text x="1220.50" y="88.00" font-family="Liberation Sans" font-size="22" fill="#f0c4c4" text-anchor="middle" font-weight="normal" stroke="#f0c4c4" stroke-width="0" textLength="51.0" lengthAdjust="spacingAndGlyphs" transform="rotate(-90 1220.50 88.00)">+3V3</text><text x="908.00" y="261.00" font-family="Liberation Sans" font-size="20" fill="#f0c4c4" text-anchor="start" font-weight="normal" stroke="#f0c4c4" stroke-width="0" textLength="62.0" lengthAdjust="spacingAndGlyphs">SS_DN1</text><text x="1448.50" y="331.25" font-family="Liberation Sans" font-size="22" fill="#f0c4c4" text-anchor="middle" font-weight="normal" stroke="#f0c4c4" stroke-width="0" textLength="24.0" lengthAdjust="spacingAndGlyphs">12</text><text x="1448.50" y="357.00" font-family="Liberation Sans" font-size="22" fill="#f0c4c4" text-anchor="middle" font-weight="normal" stroke="#f0c4c4" stroke-width="0" textLength="56.0" lengthAdjust="spacingAndGlyphs">+1V1</text><text x="1448.50" y="413.75" font-family="Liberation Sans" font-size="22" fill="#f0c4c4" text-anchor="middle" font-weight="normal" stroke="#f0c4c4" stroke-width="0" textLength="24.0" lengthAdjust="spacingAndGlyphs">11</text><text x="1448.50" y="440.00" font-family="Liberation Sans" font-size="22" fill="#f0c4c4" text-anchor="middle" font-weight="normal" stroke="#f0c4c4" stroke-width="0" textLength="95.0" lengthAdjust="spacingAndGlyphs">USB_RST</text><text x="1448.50" y="497.50" font-family="Liberation Sans" font-size="22" fill="#f0c4c4" text-anchor="middle" font-weight="normal" stroke="#f0c4c4" stroke-width="0" textLength="24.0" lengthAdjust="spacingAndGlyphs">10</text><text x="1448.50" y="523.75" font-family="Liberation Sans" font-size="22" fill="#f0c4c4" text-anchor="middle" font-weight="normal" stroke="#f0c4c4" stroke-width="0" textLength="105.0" lengthAdjust="spacingAndGlyphs">USB_TEST</text><text x="1448.50" y="580.00" font-family="Liberation Sans" font-size="22" fill="#f0c4c4" text-anchor="middle" font-weight="normal" stroke="#f0c4c4" stroke-width="0" textLength="13.0" lengthAdjust="spacingAndGlyphs">9</text><text x="1448.50" y="607.50" font-family="Liberation Sans" font-size="22" fill="#f0c4c4" text-anchor="middle" font-weight="normal" stroke="#f0c4c4" stroke-width="0" textLength="231.0" lengthAdjust="spacingAndGlyphs">Net-(U2-USB_VBUS)</text><text x="1448.50" y="662.50" font-family="Liberation Sans" font-size="22" fill="#f0c4c4" text-anchor="middle" font-weight="normal" stroke="#f0c4c4" stroke-width="0" textLength="13.0" lengthAdjust="spacingAndGlyphs">8</text><text x="1448.50" y="690.00" font-family="Liberation Sans" font-size="22" fill="#f0c4c4" text-anchor="middle" font-weight="normal" stroke="#f0c4c4" stroke-width="0" textLength="245.0" lengthAdjust="spacingAndGlyphs">Net-(U2-OVERCUR2Z)</text><text x="1448.50" y="746.25" font-family="Liberation Sans" font-size="22" fill="#f0c4c4" text-anchor="middle" font-weight="normal" stroke="#f0c4c4" stroke-width="0" textLength="13.0" lengthAdjust="spacingAndGlyphs">7</text><text x="1448.50" y="772.50" font-family="Liberation Sans" font-size="22" fill="#f0c4c4" text-anchor="middle" font-weight="normal" stroke="#f0c4c4" stroke-width="0" textLength="56.0" lengthAdjust="spacingAndGlyphs">+3V3</text><text x="1448.50" y="829.50" font-family="Liberation Sans" font-size="22" fill="#f0c4c4" text-anchor="middle" font-weight="normal" stroke="#f0c4c4" stroke-width="0" textLength="13.0" lengthAdjust="spacingAndGlyphs">6</text><text x="1448.50" y="855.60" font-family="Liberation Sans" font-size="22" fill="#f0c4c4" text-anchor="middle" font-weight="normal" stroke="#f0c4c4" stroke-width="0" textLength="11.0" lengthAdjust="spacingAndGlyphs">x</text><text x="1448.50" y="911.40" font-family="Liberation Sans" font-size="22" fill="#f0c4c4" text-anchor="middle" font-weight="normal" stroke="#f0c4c4" stroke-width="0" textLength="13.0" lengthAdjust="spacingAndGlyphs">5</text><text x="1448.50" y="942.50" font-family="Liberation Sans" font-size="22" fill="#f0c4c4" text-anchor="middle" font-weight="normal" stroke="#f0c4c4" stroke-width="0" textLength="237.0" lengthAdjust="spacingAndGlyphs">Net-(U2-OVERCUR1Z)</text><text x="1448.50" y="994.60" font-family="Liberation Sans" font-size="22" fill="#f0c4c4" text-anchor="middle" font-weight="normal" stroke="#f0c4c4" stroke-width="0" textLength="13.0" lengthAdjust="spacingAndGlyphs">4</text><rect x="903.00" y="36.25" width="91.75" height="102.75" rx="19" fill="#4d7fc4"/><rect x="1324.30" y="-6.00" width="92.40" height="103.90" rx="19" fill="#4d7fc4"/><rect x="1483.00" y="-6.00" width="94.20" height="103.90" rx="19" fill="#4d7fc4"/><rect x="1320.00" y="161.00" width="94.40" height="102.30" rx="19" fill="#4d7fc4"/><rect x="1480.40" y="161.00" width="93.60" height="102.30" rx="19" fill="#4d7fc4"/><rect x="1324.00" y="327.50" width="92.50" height="104.00" rx="19" fill="#4d7fc4"/><rect x="1483.75" y="327.50" width="92.50" height="104.00" rx="19" fill="#4d7fc4"/><rect x="1321.25" y="493.75" width="90.00" height="103.75" rx="19" fill="#4d7fc4"/><rect x="1490.00" y="492.00" width="90.00" height="105.50" rx="19" fill="#4d7fc4"/><rect x="1321.25" y="658.75" width="90.00" height="105.00" rx="19" fill="#4d7fc4"/><rect x="1490.00" y="658.75" width="90.00" height="105.00" rx="19" fill="#4d7fc4"/><rect x="1319.80" y="825.80" width="94.30" height="104.20" rx="19" fill="#4d7fc4"/><rect x="1480.00" y="825.80" width="94.30" height="104.20" rx="19" fill="#4d7fc4"/><rect x="1321.00" y="992.00" width="93.00" height="108.00" rx="19" fill="#4d7fc4"/><rect x="1490.00" y="992.00" width="90.00" height="108.00" rx="19" fill="#4d7fc4"/><rect x="923.10" y="-10.00" width="50.00" height="50.00" rx="0" fill="#4d7fc4"/><path d="M933.5 -3 A13 9 0 0 0 959 -3" fill="none" stroke="#cddcf2" stroke-width="3"/><path d="M1439 -10 L1439 0 Q1445 7 1460 7 L1483 30 L1483 -10 Z" fill="#4d7fc4"/><rect x="1279.00" y="21.50" width="51.00" height="50.00" rx="0" fill="#4d7fc4"/><path d="M1148.75 -20 L1088.75 40 L1088.75 255 A20 20 0 0 1 1068.75 275 L1006.4 275 A20 20 0 0 0 986.4 295 L986.4 316.25 A20 20 0 0 0 1006.4 336.25 L1068.75 336.25 A20 20 0 0 1 1088.75 356.25 L1088.75 378.75 A20 20 0 0 1 1068.75 398.75 L1006.4 398.75 A20 20 0 0 0 986.4 418.75 L986.4 440 A20 20 0 0 0 1006.4 460 L1068.75 460 A20 20 0 0 1 1088.75 480 L1088.75 617 L1023 682.8 L900 682.8" fill="none" stroke="#4d7fc4" stroke-width="32.5" stroke-linejoin="round"/><path d="M1224.80 -20.00 L1145.80 59.00 L1145.80 641.00 L1045.80 741.00 L900.00 741.00" fill="none" stroke="#4d7fc4" stroke-width="32" stroke-linecap="butt" stroke-linejoin="round"/><path d="M1242.60 378.75 L1242.60 341.00 L1365.00 218.60" fill="none" stroke="#4d7fc4" stroke-width="66" stroke-linecap="round" stroke-linejoin="round"/><rect x="1340.00" y="218.00" width="50.00" height="327.00" rx="0" fill="#4d7fc4"/><path d="M1030.00 1014.00 L1166.40 877.60 L1330.00 877.60" fill="none" stroke="#4d7fc4" stroke-width="32.2" stroke-linecap="butt" stroke-linejoin="round"/><path d="M1285.50 752.00 L1335.00 702.50" fill="none" stroke="#4d7fc4" stroke-width="33" stroke-linecap="round" stroke-linejoin="miter"/><path d="M1560.00 877.60 L1619.30 877.60 L1668.60 828.30" fill="none" stroke="#4d7fc4" stroke-width="33" stroke-linecap="butt" stroke-linejoin="round"/><path d="M1500.00 904.00 L1390.00 1014.00" fill="none" stroke="#4d7fc4" stroke-width="32" stroke-linecap="butt" stroke-linejoin="miter"/><path d="M1560.00 711.25 L1626.25 711.25 L1670.00 667.50" fill="none" stroke="#4d7fc4" stroke-width="32.5" stroke-linecap="butt" stroke-linejoin="round"/><path d="M1560.00 544.25 L1617.75 544.25 L1660.00 502.00" fill="none" stroke="#4d7fc4" stroke-width="33.5" stroke-linecap="butt" stroke-linejoin="round"/><path d="M1560.00 377.80 L1660.00 377.80" fill="none" stroke="#4d7fc4" stroke-width="32.4" stroke-linecap="butt" stroke-linejoin="miter"/><path d="M1560.00 212.00 L1584.00 212.00 L1637.00 265.00" fill="none" stroke="#4d7fc4" stroke-width="32.5" stroke-linecap="butt" stroke-linejoin="round"/><path d="M1668.00 103.70 L1720.00 103.70" fill="none" stroke="#4d7fc4" stroke-width="26" stroke-linecap="butt" stroke-linejoin="miter"/><circle cx="1279" cy="47" r="33" fill="#4d7fc4"/><circle cx="1279" cy="47" r="20.5" fill="#e6e6e6"/><circle cx="1279" cy="47" r="17" fill="#e2b72e"/><circle cx="1668.3" cy="105" r="33" fill="#4d7fc4"/><circle cx="1668.3" cy="105" r="20.5" fill="#e6e6e6"/><circle cx="1668.3" cy="105" r="17" fill="#e2b72e"/><circle cx="1637.1" cy="264.9" r="33" fill="#4d7fc4"/><circle cx="1637.1" cy="264.9" r="20.5" fill="#e6e6e6"/><circle cx="1637.1" cy="264.9" r="17" fill="#e2b72e"/><circle cx="1241.5" cy="378.75" r="33" fill="#4d7fc4"/><circle cx="1241.5" cy="378.75" r="20.5" fill="#e6e6e6"/><circle cx="1241.5" cy="378.75" r="17" fill="#e2b72e"/><circle cx="1660" cy="386" r="33" fill="#4d7fc4"/><circle cx="1660" cy="386" r="20.5" fill="#e6e6e6"/><circle cx="1660" cy="386" r="17" fill="#e2b72e"/><circle cx="1660" cy="502" r="33" fill="#4d7fc4"/><circle cx="1660" cy="502" r="20.5" fill="#e6e6e6"/><circle cx="1660" cy="502" r="17" fill="#e2b72e"/><circle cx="998.75" cy="537" r="33" fill="#4d7fc4"/><circle cx="998.75" cy="537" r="20.5" fill="#e6e6e6"/><circle cx="998.75" cy="537" r="17" fill="#e2b72e"/><circle cx="1670" cy="667.5" r="33" fill="#4d7fc4"/><circle cx="1670" cy="667.5" r="20.5" fill="#e6e6e6"/><circle cx="1670" cy="667.5" r="17" fill="#e2b72e"/><circle cx="1285.5" cy="752" r="33" fill="#4d7fc4"/><circle cx="1285.5" cy="752" r="20.5" fill="#e6e6e6"/><circle cx="1285.5" cy="752" r="17" fill="#e2b72e"/><circle cx="1668.6" cy="828.3" r="33" fill="#4d7fc4"/><circle cx="1668.6" cy="828.3" r="20.5" fill="#e6e6e6"/><circle cx="1668.6" cy="828.3" r="17" fill="#e2b72e"/><circle cx="1720" cy="746.8" r="33" fill="#4d7fc4"/><circle cx="1720" cy="746.8" r="20.5" fill="#e6e6e6"/><circle cx="1720" cy="746.8" r="17" fill="#e2b72e"/><text x="938.90" y="87.00" font-family="Liberation Sans" font-size="44.3" fill="#cddcf2" text-anchor="middle" font-weight="normal" stroke="#cddcf2" stroke-width="0" textLength="20.0" lengthAdjust="spacingAndGlyphs" transform="rotate(-90 938.90 87.00)">1</text><text x="986.25" y="88.00" font-family="Liberation Sans" font-size="39.3" fill="#cddcf2" text-anchor="middle" font-weight="normal" stroke="#cddcf2" stroke-width="0" textLength="60.0" lengthAdjust="spacingAndGlyphs" transform="rotate(-90 986.25 88.00)">GND</text><text x="1362.50" y="46.00" font-family="Liberation Sans" font-size="47.1" fill="#cddcf2" text-anchor="middle" font-weight="normal" stroke="#cddcf2" stroke-width="0" textLength="22.0" lengthAdjust="spacingAndGlyphs" transform="rotate(-90 1362.50 46.00)">2</text><text x="1409.30" y="46.70" font-family="Liberation Sans" font-size="40.9" fill="#cddcf2" text-anchor="middle" font-weight="normal" stroke="#cddcf2" stroke-width="0" textLength="80.0" lengthAdjust="spacingAndGlyphs" transform="rotate(-90 1409.30 46.70)">+3V3</text><text x="1521.20" y="45.60" font-family="Liberation Sans" font-size="44.3" fill="#cddcf2" text-anchor="middle" font-weight="normal" stroke="#cddcf2" stroke-width="0" textLength="20.0" lengthAdjust="spacingAndGlyphs" transform="rotate(-90 1521.20 45.60)">1</text><text x="1568.45" y="46.00" font-family="Liberation Sans" font-size="39.3" fill="#cddcf2" text-anchor="middle" font-weight="normal" stroke="#cddcf2" stroke-width="0" textLength="59.0" lengthAdjust="spacingAndGlyphs" transform="rotate(-90 1568.45 46.00)">GND</text><text x="1358.50" y="212.00" font-family="Liberation Sans" font-size="44.3" fill="#cddcf2" text-anchor="middle" font-weight="normal" stroke="#cddcf2" stroke-width="0" textLength="20.0" lengthAdjust="spacingAndGlyphs" transform="rotate(-90 1358.50 212.00)">1</text><text x="1405.65" y="212.70" font-family="Liberation Sans" font-size="39.3" fill="#cddcf2" text-anchor="middle" font-weight="normal" stroke="#cddcf2" stroke-width="0" textLength="59.0" lengthAdjust="spacingAndGlyphs" transform="rotate(-90 1405.65 212.70)">GND</text><text x="1522.50" y="212.00" font-family="Liberation Sans" font-size="47.1" fill="#cddcf2" text-anchor="middle" font-weight="normal" stroke="#cddcf2" stroke-width="0" textLength="22.0" lengthAdjust="spacingAndGlyphs" transform="rotate(-90 1522.50 212.00)">2</text><text x="1568.30" y="212.00" font-family="Liberation Sans" font-size="40.9" fill="#cddcf2" text-anchor="middle" font-weight="normal" stroke="#cddcf2" stroke-width="0" textLength="80.0" lengthAdjust="spacingAndGlyphs" transform="rotate(-90 1568.30 212.00)">+1V1</text><text x="1357.50" y="379.00" font-family="Liberation Sans" font-size="44.3" fill="#cddcf2" text-anchor="middle" font-weight="normal" stroke="#cddcf2" stroke-width="0" textLength="20.0" lengthAdjust="spacingAndGlyphs" transform="rotate(-90 1357.50 379.00)">1</text><text x="1377.50" y="379.00" font-family="Liberation Sans" font-size="39.3" fill="#cddcf2" text-anchor="middle" font-weight="normal" stroke="#cddcf2" stroke-width="0" textLength="59.0" lengthAdjust="spacingAndGlyphs" transform="rotate(-90 1377.50 379.00)">GND</text><text x="1407.50" y="379.00" font-family="Liberation Sans" font-size="39.3" fill="#cddcf2" text-anchor="middle" font-weight="normal" stroke="#cddcf2" stroke-width="0" textLength="59.0" lengthAdjust="spacingAndGlyphs" transform="rotate(-90 1407.50 379.00)">GND</text><text x="1522.50" y="379.00" font-family="Liberation Sans" font-size="47.1" fill="#cddcf2" text-anchor="middle" font-weight="normal" stroke="#cddcf2" stroke-width="0" textLength="22.0" lengthAdjust="spacingAndGlyphs" transform="rotate(-90 1522.50 379.00)">2</text><text x="1561.50" y="379.00" font-family="Liberation Sans" font-size="27.1" fill="#cddcf2" text-anchor="middle" font-weight="normal" stroke="#cddcf2" stroke-width="0" textLength="100.0" lengthAdjust="spacingAndGlyphs" transform="rotate(-90 1561.50 379.00)">USB_RST</text><text x="1359.50" y="543.00" font-family="Liberation Sans" font-size="47.1" fill="#cddcf2" text-anchor="middle" font-weight="normal" stroke="#cddcf2" stroke-width="0" textLength="22.0" lengthAdjust="spacingAndGlyphs" transform="rotate(-90 1359.50 543.00)">2</text><text x="1405.75" y="543.00" font-family="Liberation Sans" font-size="39.3" fill="#cddcf2" text-anchor="middle" font-weight="normal" stroke="#cddcf2" stroke-width="0" textLength="59.0" lengthAdjust="spacingAndGlyphs" transform="rotate(-90 1405.75 543.00)">GND</text><text x="1529.25" y="543.00" font-family="Liberation Sans" font-size="44.3" fill="#cddcf2" text-anchor="middle" font-weight="normal" stroke="#cddcf2" stroke-width="0" textLength="20.0" lengthAdjust="spacingAndGlyphs" transform="rotate(-90 1529.25 543.00)">1</text><text x="1562.40" y="546.00" font-family="Liberation Sans" font-size="22.9" fill="#cddcf2" text-anchor="middle" font-weight="normal" stroke="#cddcf2" stroke-width="0" textLength="95.0" lengthAdjust="spacingAndGlyphs" transform="rotate(-90 1562.40 546.00)">USB_TEST</text><text x="1359.50" y="711.00" font-family="Liberation Sans" font-size="47.1" fill="#cddcf2" text-anchor="middle" font-weight="normal" stroke="#cddcf2" stroke-width="0" textLength="22.0" lengthAdjust="spacingAndGlyphs" transform="rotate(-90 1359.50 711.00)">2</text><text x="1406.30" y="711.00" font-family="Liberation Sans" font-size="40.9" fill="#cddcf2" text-anchor="middle" font-weight="normal" stroke="#cddcf2" stroke-width="0" textLength="80.0" lengthAdjust="spacingAndGlyphs" transform="rotate(-90 1406.30 711.00)">+3V3</text><text x="1527.40" y="711.00" font-family="Liberation Sans" font-size="44.3" fill="#cddcf2" text-anchor="middle" font-weight="normal" stroke="#cddcf2" stroke-width="0" textLength="20.0" lengthAdjust="spacingAndGlyphs" transform="rotate(-90 1527.40 711.00)">1</text><text x="1549.00" y="712.00" font-family="Liberation Sans" font-size="11.4" fill="#cddcf2" text-anchor="middle" font-weight="normal" stroke="#cddcf2" stroke-width="0" textLength="103.0" lengthAdjust="spacingAndGlyphs" transform="rotate(-90 1549.00 712.00)">Net-(U2-OVERCUR2Z)</text><text x="1357.50" y="877.00" font-family="Liberation Sans" font-size="44.3" fill="#cddcf2" text-anchor="middle" font-weight="normal" stroke="#cddcf2" stroke-width="0" textLength="20.0" lengthAdjust="spacingAndGlyphs" transform="rotate(-90 1357.50 877.00)">1</text><text x="1405.75" y="877.00" font-family="Liberation Sans" font-size="39.3" fill="#cddcf2" text-anchor="middle" font-weight="normal" stroke="#cddcf2" stroke-width="0" textLength="59.0" lengthAdjust="spacingAndGlyphs" transform="rotate(-90 1405.75 877.00)">GND</text><text x="1522.50" y="877.00" font-family="Liberation Sans" font-size="47.1" fill="#cddcf2" text-anchor="middle" font-weight="normal" stroke="#cddcf2" stroke-width="0" textLength="22.0" lengthAdjust="spacingAndGlyphs" transform="rotate(-90 1522.50 877.00)">2</text><text x="1568.30" y="877.00" font-family="Liberation Sans" font-size="40.9" fill="#cddcf2" text-anchor="middle" font-weight="normal" stroke="#cddcf2" stroke-width="0" textLength="80.0" lengthAdjust="spacingAndGlyphs" transform="rotate(-90 1568.30 877.00)">+3V3</text><rect x="879.0" y="12.2" width="139.8" height="150.8" rx="42" fill="none" stroke="#4d7fc4" stroke-width="1"/><rect x="1300.3" y="-30.0" width="140.4" height="151.9" rx="42" fill="none" stroke="#4d7fc4" stroke-width="1"/><rect x="1459.0" y="-30.0" width="142.2" height="151.9" rx="42" fill="none" stroke="#4d7fc4" stroke-width="1"/><rect x="1296.0" y="137.0" width="142.4" height="150.3" rx="42" fill="none" stroke="#4d7fc4" stroke-width="1"/><rect x="1456.4" y="137.0" width="141.6" height="150.3" rx="42" fill="none" stroke="#4d7fc4" stroke-width="1"/><rect x="1300.0" y="303.5" width="140.5" height="152.0" rx="42" fill="none" stroke="#4d7fc4" stroke-width="1"/><rect x="1459.8" y="303.5" width="140.5" height="152.0" rx="42" fill="none" stroke="#4d7fc4" stroke-width="1"/><rect x="1297.2" y="469.8" width="138.0" height="151.8" rx="42" fill="none" stroke="#4d7fc4" stroke-width="1"/><rect x="1466.0" y="468.0" width="138.0" height="153.5" rx="42" fill="none" stroke="#4d7fc4" stroke-width="1"/><rect x="1297.2" y="634.8" width="138.0" height="153.0" rx="42" fill="none" stroke="#4d7fc4" stroke-width="1"/><rect x="1466.0" y="634.8" width="138.0" height="153.0" rx="42" fill="none" stroke="#4d7fc4" stroke-width="1"/><rect x="1295.8" y="801.8" width="142.3" height="152.2" rx="42" fill="none" stroke="#4d7fc4" stroke-width="1"/><rect x="1456.0" y="801.8" width="142.3" height="152.2" rx="42" fill="none" stroke="#4d7fc4" stroke-width="1"/><rect x="1297.0" y="968.0" width="141.0" height="156.0" rx="42" fill="none" stroke="#4d7fc4" stroke-width="1"/><rect x="1466.0" y="968.0" width="138.0" height="156.0" rx="42" fill="none" stroke="#4d7fc4" stroke-width="1"/><rect x="1325.00" y="394.00" width="246.25" height="50.00" rx="0" fill="#e08a8a"/><text x="1448.50" y="413.75" font-family="Liberation Sans" font-size="22" fill="#fbe6e6" text-anchor="middle" font-weight="normal" stroke="#fbe6e6" stroke-width="0" textLength="24.0" lengthAdjust="spacingAndGlyphs">11</text><text x="1448.50" y="440.00" font-family="Liberation Sans" font-size="22" fill="#fbe6e6" text-anchor="middle" font-weight="normal" stroke="#fbe6e6" stroke-width="0" textLength="95.0" lengthAdjust="spacingAndGlyphs">USB_RST</text><rect x="1300" y="369.5" width="295.5" height="98.5" rx="25" fill="none" stroke="#e89090" stroke-width="1"/><circle cx="881.6" cy="324.5" r="37.4" fill="#4d7fc4"/><circle cx="881.6" cy="417" r="37.4" fill="#4d7fc4"/><path d="M907.5 325.5H915M911.2 321.5V329.5M907.5 417.5H914" stroke="#111111" stroke-width="1.6"/><path d="M912.6 269V348M908 309.2H952" stroke="#b8b8b8" stroke-width="1"/><circle cx="813" cy="952" r="106" fill="#efc4c4"/><rect x="1711" y="45" width="120" height="150" rx="42" fill="none" stroke="#4d7fc4" stroke-width="1"/><text x="1279.00" y="55.30" font-family="Liberation Sans" font-size="27.0" fill="#000000" text-anchor="middle" font-weight="normal" stroke="#000000" stroke-width="0.35" textLength="57.0" lengthAdjust="spacingAndGlyphs">+3V3</text><text x="1668.30" y="107.72" font-family="Liberation Sans" font-size="10.8" fill="#000000" text-anchor="middle" font-weight="normal" stroke="#000000" stroke-width="0.1" textLength="59.0" lengthAdjust="spacingAndGlyphs">LED_SS_DN1</text><text x="1637.10" y="273.20" font-family="Liberation Sans" font-size="27.0" fill="#000000" text-anchor="middle" font-weight="normal" stroke="#000000" stroke-width="0.35" textLength="58.0" lengthAdjust="spacingAndGlyphs">+1V1</text><text x="1241.50" y="390.15" font-family="Liberation Sans" font-size="36.0" fill="#000000" text-anchor="middle" font-weight="normal" stroke="#000000" stroke-width="0.35" textLength="57.0" lengthAdjust="spacingAndGlyphs">GND</text><text x="1660.00" y="390.31" font-family="Liberation Sans" font-size="15.4" fill="#000000" text-anchor="middle" font-weight="normal" stroke="#000000" stroke-width="0.1" textLength="60.0" lengthAdjust="spacingAndGlyphs">USB_RST</text><text x="1660.00" y="505.65" font-family="Liberation Sans" font-size="13.5" fill="#000000" text-anchor="middle" font-weight="normal" stroke="#000000" stroke-width="0.1" textLength="64.0" lengthAdjust="spacingAndGlyphs">USB_TEST</text><text x="998.75" y="548.40" font-family="Liberation Sans" font-size="36.0" fill="#000000" text-anchor="middle" font-weight="normal" stroke="#000000" stroke-width="0.35" textLength="57.0" lengthAdjust="spacingAndGlyphs">GND</text><text x="1670.00" y="668.57" font-family="Liberation Sans" font-size="6.0" fill="#000000" text-anchor="middle" font-weight="normal" stroke="#000000" stroke-width="0.1" textLength="62.0" lengthAdjust="spacingAndGlyphs">Net-(U2-OVERCUR2Z)</text><text x="1285.50" y="760.30" font-family="Liberation Sans" font-size="27.0" fill="#000000" text-anchor="middle" font-weight="normal" stroke="#000000" stroke-width="0.35" textLength="57.0" lengthAdjust="spacingAndGlyphs">+3V3</text><text x="1668.60" y="836.60" font-family="Liberation Sans" font-size="27.0" fill="#000000" text-anchor="middle" font-weight="normal" stroke="#000000" stroke-width="0.35" textLength="57.0" lengthAdjust="spacingAndGlyphs">+3V3</text><text x="1720.00" y="755.10" font-family="Liberation Sans" font-size="27.0" fill="#000000" text-anchor="middle" font-weight="normal" stroke="#000000" stroke-width="0.35" textLength="57.0" lengthAdjust="spacingAndGlyphs">+3V3</text><text x="1266.00" y="884.50" font-family="Liberation Sans" font-size="22" fill="#cddcf2" text-anchor="middle" font-weight="normal" stroke="#cddcf2" stroke-width="0" textLength="44.0" lengthAdjust="spacingAndGlyphs">GND</text><text x="1087.50" y="965.50" font-family="Liberation Sans" font-size="22" fill="#cddcf2" text-anchor="middle" font-weight="normal" stroke="#cddcf2" stroke-width="0" textLength="44.0" lengthAdjust="spacingAndGlyphs" transform="rotate(-45 1087.50 965.50)">GND</text><text x="1453.70" y="962.70" font-family="Liberation Sans" font-size="22" fill="#cddcf2" text-anchor="middle" font-weight="normal" stroke="#cddcf2" stroke-width="0" textLength="56.0" lengthAdjust="spacingAndGlyphs" transform="rotate(-45 1453.70 962.70)">+3V3</text><text x="1155.50" y="350.50" font-family="Liberation Sans" font-size="27.1" fill="#cddcf2" text-anchor="middle" font-weight="normal" stroke="#cddcf2" stroke-width="0" textLength="85.0" lengthAdjust="spacingAndGlyphs" transform="rotate(-90 1155.50 350.50)">USB_D+</text></svg></svg></body></html>
